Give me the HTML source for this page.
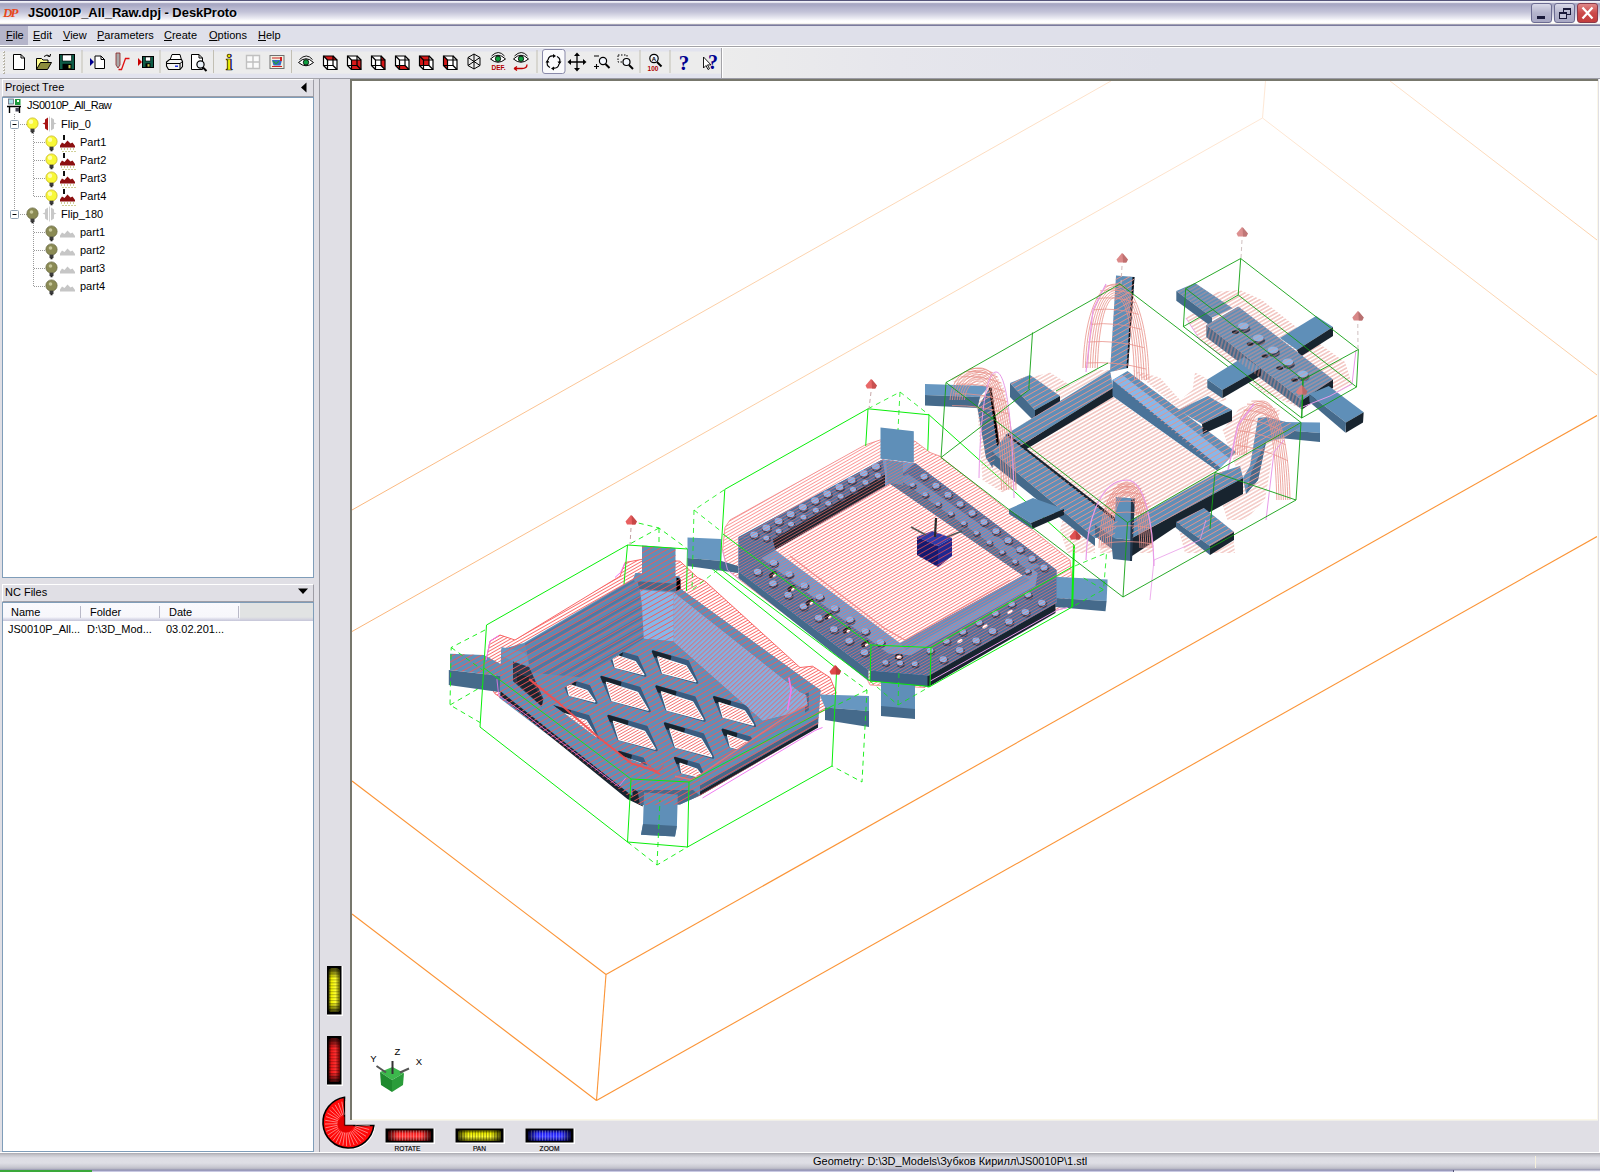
<!DOCTYPE html>
<html lang="en">
<head>
<meta charset="utf-8">
<title>JS0010P_All_Raw.dpj - DeskProto</title>
<style>
*{box-sizing:border-box;margin:0;padding:0}
html,body{width:1600px;height:1172px;overflow:hidden;background:#e0dfe5;font-family:"Liberation Sans",sans-serif;font-size:11px;color:#000}
.abs{position:absolute}
#titlebar{left:0;top:0;width:1600px;height:26px;background:linear-gradient(to bottom,#55557a 0,#55557a 1px,#f0f0f8 1px,#eeeef6 2.3px,#a8a8c2 3.6px,#a8a8c4 5px,#b6b6ce 8px,#c4c4d8 12px,#dcdce8 16px,#f0f0f6 19px,#ffffff 21px,#fefefe 22.5px,#f6f4ee 23px,#f0eee8 24.3px,#7a7a9c 24.6px,#7a7a9c 26px)}
#title{left:28px;top:4px;font-weight:bold;font-size:13px;letter-spacing:-0.05px;line-height:18px;white-space:nowrap;text-shadow:1px 1px 1px rgba(255,255,255,.6)}
#dp{left:3px;top:4px;font-family:"Liberation Serif",serif;font-style:italic;font-weight:bold;font-size:13px;color:#e8481c;letter-spacing:-2px;line-height:18px}
.wbtn{top:3px;width:21px;height:20px;border:1px solid #6c6c92;border-radius:3px;background:linear-gradient(to bottom,#d8d8e8,#b4b4cc 50%,#a8a8c4)}
#menubar{left:0;top:26px;width:1600px;height:19px;background:#dfe0ea}
#menubar span{position:absolute;top:0;height:19px;line-height:18px;white-space:nowrap}
#menubar u{text-decoration:underline}
#toolbar{left:0;top:45px;width:1600px;height:33px;background:linear-gradient(to bottom,#ffffff 0,#ffffff 1px,#a2a2a6 1px,#a2a2a6 2px,#ffffff 2px,#ffffff 3px,#e2e3ee 3px,#e2e3ee 6px,#ececec 7px,#ececec 28px,#e2e3ee 29.5px,#e2e3ee 33px)}
#tbfill{left:723px;top:48px;width:877px;height:30px;background:linear-gradient(to right,#ececec 0,#e6e6ec 20%,#e0e1ea 50%)}
.hdr{left:2px;width:312px;height:18px;background:#e0dfe5;border:1px solid #9d9da6;border-top-color:#fff;border-left-color:#fff;line-height:14px;padding-left:2px;white-space:nowrap}
.pane{left:2px;width:312px;background:#fff;border:1px solid #7f9db9}
.tree span{position:absolute;white-space:nowrap;line-height:14px;height:14px}
svg{position:absolute;left:0;top:0;overflow:visible}
</style>
</head>
<body>
<!-- ===== title bar ===== -->
<div id="titlebar" class="abs"></div>
<div id="dp" class="abs">DP</div>
<div id="title" class="abs">JS0010P_All_Raw.dpj - DeskProto</div>
<div class="abs wbtn" style="left:1531px"><div class="abs" style="left:5px;top:12px;width:8px;height:3px;background:#1a1a3a"></div></div>
<div class="abs wbtn" style="left:1554px">
  <div class="abs" style="left:8px;top:4px;width:8px;height:7px;border:1px solid #1a1a3a;border-top-width:2px"></div>
  <div class="abs" style="left:4px;top:8px;width:8px;height:7px;border:1px solid #1a1a3a;border-top-width:2px;background:#c4c4d8"></div>
</div>
<div class="abs wbtn" style="left:1577px;background:linear-gradient(to bottom,#e08888,#cc4a4a 50%,#c23c3c);border-color:#8a3a4a">
  <svg width="21" height="20" viewBox="0 0 21 20" style="left:-1px;top:-1px"><path d="M5.5 4.5 L15.5 15.5 M15.5 4.5 L5.5 15.5" stroke="#fff" stroke-width="2.2" fill="none"/></svg>
</div>

<!-- ===== menu bar ===== -->
<div id="menubar" class="abs">
  <div class="abs" style="left:0;top:0;width:28px;height:19px;background:#b5b5ca"></div>
  <span style="left:6px"><u>F</u>ile</span>
  <span style="left:33px"><u>E</u>dit</span>
  <span style="left:63px"><u>V</u>iew</span>
  <span style="left:97px"><u>P</u>arameters</span>
  <span style="left:164px"><u>C</u>reate</span>
  <span style="left:209px"><u>O</u>ptions</span>
  <span style="left:258px"><u>H</u>elp</span>
</div>

<!-- ===== toolbar ===== -->
<div id="toolbar" class="abs"></div>
<div id="tbfill" class="abs"></div>
<div class="abs" style="left:0;top:78px;width:1600px;height:1px;background:#a4a4aa"></div>
<div class="abs" style="left:721px;top:48px;width:1px;height:30px;background:#a4a4a8"></div><div class="abs" style="left:722px;top:48px;width:1px;height:30px;background:#fff"></div>
<svg width="1600" height="1172" viewBox="0 0 1600 1172" style="pointer-events:none">
<rect x="3" y="51" width="2" height="2" fill="#b8b5a8"/><rect x="3" y="51" width="1" height="1" fill="#fff"/>
<rect x="3" y="54" width="2" height="2" fill="#b8b5a8"/><rect x="3" y="54" width="1" height="1" fill="#fff"/>
<rect x="3" y="57" width="2" height="2" fill="#b8b5a8"/><rect x="3" y="57" width="1" height="1" fill="#fff"/>
<rect x="3" y="60" width="2" height="2" fill="#b8b5a8"/><rect x="3" y="60" width="1" height="1" fill="#fff"/>
<rect x="3" y="63" width="2" height="2" fill="#b8b5a8"/><rect x="3" y="63" width="1" height="1" fill="#fff"/>
<rect x="3" y="66" width="2" height="2" fill="#b8b5a8"/><rect x="3" y="66" width="1" height="1" fill="#fff"/>
<rect x="3" y="69" width="2" height="2" fill="#b8b5a8"/><rect x="3" y="69" width="1" height="1" fill="#fff"/>
<rect x="3" y="72" width="2" height="2" fill="#b8b5a8"/><rect x="3" y="72" width="1" height="1" fill="#fff"/>
<rect x="81.5" y="50" width="1" height="23" fill="#c2bfb4"/>
<rect x="159.5" y="50" width="1" height="23" fill="#c2bfb4"/>
<rect x="213.0" y="50" width="1" height="23" fill="#c2bfb4"/>
<rect x="291.0" y="50" width="1" height="23" fill="#c2bfb4"/>
<rect x="536.5" y="50" width="1" height="23" fill="#c2bfb4"/>
<rect x="639.5" y="50" width="1" height="23" fill="#c2bfb4"/>
<rect x="669.5" y="50" width="1" height="23" fill="#c2bfb4"/>
<path d="M13.5 54.5 h7.5 l3.5 3.5 v11.5 h-11.0 z" fill="#fff" stroke="#000" stroke-width="1" /><path d="M21.0 54.5 v3.5 h3.5" fill="none" stroke="#000" stroke-width="1"/>
<path d="M36.5 69.5 v-11 h5 l1.5 1.5 h5 v2.5" fill="#ffff90" stroke="#000" stroke-width="1"/>
<path d="M36.5 69.5 l4 -7 h11 l-4 7 z" fill="#8c8c3c" stroke="#000" stroke-width="1"/>
<path d="M44 56.5 q3 -3 6 0 m0 0 l-2.5 -0.5 m2.5 0.5 l0.5 -2.5" fill="none" stroke="#000" stroke-width="1"/>
<rect x="59.5" y="54.5" width="15" height="15" fill="#0e5c46" stroke="#000" stroke-width="1"/><rect x="62.5" y="55.0" width="9" height="6" fill="#fff" stroke="#000" stroke-width="0.6"/><rect x="62.5" y="63.8" width="9" height="5.7" fill="#000"/><rect x="68.5" y="65.0" width="2" height="3.3" fill="#c8c850"/>
<path d="M90 58 l4 4 l-4 4 z" fill="#000090"/>
<path d="M95.0 56.0 h6.0 l3.5 3.5 v9.0 h-9.5 z" fill="#fff" stroke="#000" stroke-width="1" /><path d="M101.0 56.0 v3.5 h3.5" fill="none" stroke="#000" stroke-width="1"/>
<path d="M116 53 h4 v12 l-2 3 l-2 -3 z" fill="#a8a8a8" stroke="#8a2020" stroke-width="0.8"/>
<path d="M118.5 69.5 h3 l4 -11 h4" fill="none" stroke="#e01010" stroke-width="1.3"/>
<path d="M138 58 l4 4 l-4 4 z" fill="#c80000"/>
<rect x="142.5" y="56.5" width="11" height="11" fill="#0e5c46" stroke="#000" stroke-width="1"/><rect x="145.5" y="57.0" width="5" height="4" fill="#fff" stroke="#000" stroke-width="0.6"/><rect x="145.5" y="63.3" width="5" height="4.2" fill="#000"/><rect x="147.5" y="64.2" width="2" height="2.4" fill="#c8c850"/>
<path d="M170 60 l2 -5.5 h8 l1.5 5.5" fill="#fff" stroke="#000" stroke-width="1"/>
<path d="M166.5 66 v-4 l3 -2.5 h12 l1 2 v5 l-2.5 3 h-11.5 z" fill="#f4f4f4" stroke="#000" stroke-width="1.1"/>
<path d="M166.5 63.5 h13.5 l2.5 -2 M180 63.5 v5.5" fill="none" stroke="#000" stroke-width="1"/><rect x="175" y="65.5" width="3" height="1.5" fill="#2030e0"/>
<path d="M191.5 54.5 h7.5 l3.5 3.5 v11.5 h-11.0 z" fill="#fff" stroke="#000" stroke-width="1" /><path d="M199.0 54.5 v3.5 h3.5" fill="none" stroke="#000" stroke-width="1"/>
<circle cx="200.5" cy="64.5" r="3.6" fill="#e8f0f8" stroke="#000" stroke-width="1.2"/><path d="M203 67.5 l3.5 3.5" stroke="#000" stroke-width="2"/>
<text x="230" y="70" text-anchor="middle" font-family="Liberation Serif,serif" font-weight="bold" font-size="23" fill="#2020c0">i</text>
<text x="229" y="69.5" text-anchor="middle" font-family="Liberation Serif,serif" font-weight="bold" font-size="23" fill="#f8f000" stroke="#000" stroke-width="0.7">i</text>
<path d="M246.5 55.5 h13 v13 h-13 z M253 55.5 v13 M246.5 62 h13" fill="#fafafa" stroke="#c0c0c0" stroke-width="1.4"/>
<rect x="270" y="55.5" width="14" height="13" fill="#f0f0e0" stroke="#707070" stroke-width="1"/>
<path d="M272 58 h10 M272 66.5 h10" stroke="#d02020" stroke-width="1.2"/><path d="M272 60 h10 l-1.5 5.5 h-7 z" fill="#3868c8"/><path d="M273 61 l3 3 l3 -3" fill="none" stroke="#20a040" stroke-width="1.2"/><rect x="280" y="57" width="2" height="4" fill="#d02020"/>
<path d="M298.5 62.5 q7.5 -7.5 15 0 q-7.5 6.5 -15 0 z" fill="#fff" stroke="#000" stroke-width="1"/><circle cx="306.0" cy="62.3" r="2.7" fill="#10a040" stroke="#000" stroke-width="0.8"/><path d="M299.5 59.5 q7 -7 13 0" fill="none" stroke="#000" stroke-width="0.9"/>
<polygon points="323.5,56.0 333.0,56.0 337.0,60.0 337.0,69.5 327.5,69.5 323.5,65.5" fill="#fff"/><polygon points="323.5,56.0 327.5,60.0 337.0,60.0 333.0,56.0" fill="#d81818"/><polygon points="323.5,56.0 333.0,56.0 333.0,65.5 323.5,65.5" fill="none" stroke="#000" stroke-width="1.2"/><polygon points="327.5,60.0 337.0,60.0 337.0,69.5 327.5,69.5" fill="none" stroke="#000" stroke-width="1.2"/><path d="M323.5 56.0 L327.5 60.0" stroke="#000" stroke-width="1.2"/><path d="M333.0 56.0 L337.0 60.0" stroke="#000" stroke-width="1.2"/><path d="M333.0 65.5 L337.0 69.5" stroke="#000" stroke-width="1.2"/><path d="M323.5 65.5 L327.5 69.5" stroke="#000" stroke-width="1.2"/>
<polygon points="347.5,56.0 357.0,56.0 361.0,60.0 361.0,69.5 351.5,69.5 347.5,65.5" fill="#fff"/><polygon points="351.5,60.0 361.0,60.0 361.0,69.5 351.5,69.5" fill="#d81818"/><polygon points="347.5,56.0 357.0,56.0 357.0,65.5 347.5,65.5" fill="none" stroke="#000" stroke-width="1.2"/><polygon points="351.5,60.0 361.0,60.0 361.0,69.5 351.5,69.5" fill="none" stroke="#000" stroke-width="1.2"/><path d="M347.5 56.0 L351.5 60.0" stroke="#000" stroke-width="1.2"/><path d="M357.0 56.0 L361.0 60.0" stroke="#000" stroke-width="1.2"/><path d="M357.0 65.5 L361.0 69.5" stroke="#000" stroke-width="1.2"/><path d="M347.5 65.5 L351.5 69.5" stroke="#000" stroke-width="1.2"/>
<polygon points="371.5,56.0 381.0,56.0 385.0,60.0 385.0,69.5 375.5,69.5 371.5,65.5" fill="#fff"/><polygon points="381.0,56.0 385.0,60.0 385.0,69.5 381.0,65.5" fill="#d81818"/><polygon points="371.5,56.0 381.0,56.0 381.0,65.5 371.5,65.5" fill="none" stroke="#000" stroke-width="1.2"/><polygon points="375.5,60.0 385.0,60.0 385.0,69.5 375.5,69.5" fill="none" stroke="#000" stroke-width="1.2"/><path d="M371.5 56.0 L375.5 60.0" stroke="#000" stroke-width="1.2"/><path d="M381.0 56.0 L385.0 60.0" stroke="#000" stroke-width="1.2"/><path d="M381.0 65.5 L385.0 69.5" stroke="#000" stroke-width="1.2"/><path d="M371.5 65.5 L375.5 69.5" stroke="#000" stroke-width="1.2"/>
<polygon points="395.5,56.0 405.0,56.0 409.0,60.0 409.0,69.5 399.5,69.5 395.5,65.5" fill="#fff"/><polygon points="395.5,65.5 399.5,69.5 409.0,69.5 405.0,65.5" fill="#d81818"/><polygon points="395.5,56.0 405.0,56.0 405.0,65.5 395.5,65.5" fill="none" stroke="#000" stroke-width="1.2"/><polygon points="399.5,60.0 409.0,60.0 409.0,69.5 399.5,69.5" fill="none" stroke="#000" stroke-width="1.2"/><path d="M395.5 56.0 L399.5 60.0" stroke="#000" stroke-width="1.2"/><path d="M405.0 56.0 L409.0 60.0" stroke="#000" stroke-width="1.2"/><path d="M405.0 65.5 L409.0 69.5" stroke="#000" stroke-width="1.2"/><path d="M395.5 65.5 L399.5 69.5" stroke="#000" stroke-width="1.2"/>
<polygon points="419.5,56.0 429.0,56.0 433.0,60.0 433.0,69.5 423.5,69.5 419.5,65.5" fill="#fff"/><polygon points="419.5,56.0 429.0,56.0 429.0,65.5 419.5,65.5" fill="#d81818"/><polygon points="419.5,56.0 429.0,56.0 429.0,65.5 419.5,65.5" fill="none" stroke="#000" stroke-width="1.2"/><polygon points="423.5,60.0 433.0,60.0 433.0,69.5 423.5,69.5" fill="none" stroke="#000" stroke-width="1.2"/><path d="M419.5 56.0 L423.5 60.0" stroke="#000" stroke-width="1.2"/><path d="M429.0 56.0 L433.0 60.0" stroke="#000" stroke-width="1.2"/><path d="M429.0 65.5 L433.0 69.5" stroke="#000" stroke-width="1.2"/><path d="M419.5 65.5 L423.5 69.5" stroke="#000" stroke-width="1.2"/>
<polygon points="443.5,56.0 453.0,56.0 457.0,60.0 457.0,69.5 447.5,69.5 443.5,65.5" fill="#fff"/><polygon points="443.5,56.0 447.5,60.0 447.5,69.5 443.5,65.5" fill="#d81818"/><polygon points="443.5,56.0 453.0,56.0 453.0,65.5 443.5,65.5" fill="none" stroke="#000" stroke-width="1.2"/><polygon points="447.5,60.0 457.0,60.0 457.0,69.5 447.5,69.5" fill="none" stroke="#000" stroke-width="1.2"/><path d="M443.5 56.0 L447.5 60.0" stroke="#000" stroke-width="1.2"/><path d="M453.0 56.0 L457.0 60.0" stroke="#000" stroke-width="1.2"/><path d="M453.0 65.5 L457.0 69.5" stroke="#000" stroke-width="1.2"/><path d="M443.5 65.5 L447.5 69.5" stroke="#000" stroke-width="1.2"/>
<path d="M474 54 l6 3.5 v8 l-6 3.5 l-6 -3.5 v-8 z M474 54 v15 M468 57.5 l12 8 M480 57.5 l-12 8" fill="none" stroke="#000" stroke-width="1"/>
<path d="M490.5 59.0 q7.5 -7.5 15 0 q-7.5 6.5 -15 0 z" fill="#fff" stroke="#000" stroke-width="1"/><circle cx="498.0" cy="58.8" r="2.7" fill="#10a040" stroke="#000" stroke-width="0.8"/><path d="M491.5 56.0 q7 -7 13 0" fill="none" stroke="#000" stroke-width="0.9"/>
<text x="498.5" y="70" text-anchor="middle" font-family="Liberation Sans,sans-serif" font-weight="bold" font-size="6.5" fill="#b00000">DEF.</text>
<path d="M513.5 59.0 q7.5 -7.5 15 0 q-7.5 6.5 -15 0 z" fill="#fff" stroke="#000" stroke-width="1"/><circle cx="521.0" cy="58.8" r="2.7" fill="#10a040" stroke="#000" stroke-width="0.8"/><path d="M514.5 56.0 q7 -7 13 0" fill="none" stroke="#000" stroke-width="0.9"/>
<path d="M514 68.5 h8 q5 0 5 -4 M514 68.5 l3 -2 M514 68.5 l3 2" fill="none" stroke="#c00000" stroke-width="1.3"/>
<rect x="542.5" y="49.5" width="22.5" height="24" rx="2.5" fill="#fafafc" stroke="#8a8aaa" stroke-width="1"/>
<g fill="none" stroke="#000" stroke-width="1.2"><path d="M548 60 q1 -5 6 -4"/><path d="M559 64 q-1 5 -6 4"/><path d="M557 56.5 q4 2 2.5 6"/><path d="M550 67.5 q-4 -2 -2.5 -6"/></g>
<g fill="#000"><path d="M553 54 l3 2 l-3 2z"/><path d="M554 70.5 l-3 -2 l3 -2z"/><path d="M561.5 61.5 l-2 3 l-2 -3z"/><path d="M545.5 62.5 l2 -3 l2 3z"/></g>
<path d="M577 54 v16 M569 62 h16" stroke="#000" stroke-width="1.3"/><g fill="#000"><path d="M577 52.5 l3 3.5 h-6z"/><path d="M577 71.5 l3 -3.5 h-6z"/><path d="M567.5 62 l3.5 -3 v6z"/><path d="M586.5 62 l-3.5 -3 v6z"/></g>
<circle cx="603" cy="61" r="3.6" fill="#f4f8ff" stroke="#000" stroke-width="1.2"/><path d="M605.5 64 l4 4" stroke="#000" stroke-width="2"/><path d="M594 56 h5 M594 66.5 h5 M596.5 64 v5" stroke="#000" stroke-width="1.1"/>
<rect x="618" y="55" width="9" height="7" fill="none" stroke="#000" stroke-width="1" stroke-dasharray="1.5 1.5"/><circle cx="626.5" cy="62" r="3.5" fill="#f4f8ff" stroke="#000" stroke-width="1.2"/><path d="M629 65 l4 4" stroke="#000" stroke-width="2"/>
<circle cx="654" cy="58.5" r="4.2" fill="#f4f8ff" stroke="#000" stroke-width="1.2"/><path d="M657 62 l4.5 4.5" stroke="#000" stroke-width="2"/><text x="654" y="61" text-anchor="middle" font-family="Liberation Sans,sans-serif" font-size="6" font-weight="bold" fill="#000">A</text><text x="653" y="71" text-anchor="middle" font-family="Liberation Sans,sans-serif" font-weight="bold" font-size="6.5" fill="#b00000">100</text>
<text x="684" y="69.5" text-anchor="middle" font-family="Liberation Serif,serif" font-weight="bold" font-size="21" fill="#000090">?</text>
<path d="M703.5 57 v11 l2.5 -2.5 l2 4 l1.5 -0.8 l-2 -3.8 h3.5 z" fill="#fff" stroke="#000" stroke-width="0.9"/><text x="713" y="68.5" text-anchor="middle" font-family="Liberation Serif,serif" font-weight="bold" font-size="20" fill="#000090">?</text>
</svg>

<!-- ===== left panel ===== -->
<div class="abs" style="left:0;top:79px;width:320px;height:1073px;background:#e0dfe5"></div>
<div class="abs hdr" style="top:79px">Project Tree</div>
<div class="abs pane tree" style="top:97px;height:481px">
<span style="left:24px;top:0px;letter-spacing:-0.45px">JS0010P_All_Raw</span>
<span style="left:58px;top:19px">Flip_0</span>
<span style="left:77px;top:37px">Part1</span>
<span style="left:77px;top:55px">Part2</span>
<span style="left:77px;top:73px">Part3</span>
<span style="left:77px;top:91px">Part4</span>
<span style="left:58px;top:109px">Flip_180</span>
<span style="left:77px;top:127px">part1</span>
<span style="left:77px;top:145px">part2</span>
<span style="left:77px;top:163px">part3</span>
<span style="left:77px;top:181px">part4</span>
<svg width="1600" height="1172" viewBox="3 98 1600 1172" style="left:0;top:0">
<path d="M14.5 114 V214" stroke="#9a9a9a" stroke-width="1" stroke-dasharray="1 1"/>
<path d="M20 124.5 H27" stroke="#9a9a9a" stroke-width="1" stroke-dasharray="1 1"/>
<path d="M20 214.5 H27" stroke="#9a9a9a" stroke-width="1" stroke-dasharray="1 1"/>
<path d="M33.5 133 V196.5" stroke="#9a9a9a" stroke-width="1" stroke-dasharray="1 1"/><path d="M33.5 223 V286.5" stroke="#9a9a9a" stroke-width="1" stroke-dasharray="1 1"/>
<path d="M34 142.5 H46" stroke="#9a9a9a" stroke-width="1" stroke-dasharray="1 1"/>
<path d="M34 160.5 H46" stroke="#9a9a9a" stroke-width="1" stroke-dasharray="1 1"/>
<path d="M34 178.5 H46" stroke="#9a9a9a" stroke-width="1" stroke-dasharray="1 1"/>
<path d="M34 196.5 H46" stroke="#9a9a9a" stroke-width="1" stroke-dasharray="1 1"/>
<path d="M34 232.5 H46" stroke="#9a9a9a" stroke-width="1" stroke-dasharray="1 1"/>
<path d="M34 250.5 H46" stroke="#9a9a9a" stroke-width="1" stroke-dasharray="1 1"/>
<path d="M34 268.5 H46" stroke="#9a9a9a" stroke-width="1" stroke-dasharray="1 1"/>
<path d="M34 286.5 H46" stroke="#9a9a9a" stroke-width="1" stroke-dasharray="1 1"/>
<rect x="8.5" y="99" width="5" height="5" fill="#a8e0e8" stroke="#667" stroke-width="0.8"/><rect x="15" y="99" width="5.5" height="6" fill="#1c9a3c"/><rect x="17" y="100" width="2" height="2" fill="#fff"/>
<path d="M7 106.5 H21 M9.5 107 V113 M19.5 107 V113" stroke="#000" stroke-width="1.4" fill="none"/><rect x="15.5" y="108" width="3.5" height="3.5" fill="#445"/>
<rect x="10.5" y="120.5" width="8" height="8" rx="1" fill="#fff" stroke="#8ea0b4" stroke-width="1"/><path d="M12.5 124.5 H16.5" stroke="#000" stroke-width="1"/>
<rect x="10.5" y="210.5" width="8" height="8" rx="1" fill="#fff" stroke="#8ea0b4" stroke-width="1"/><path d="M12.5 214.5 H16.5" stroke="#000" stroke-width="1"/>
<circle cx="32.5" cy="123.5" r="5.6" fill="#f8f838" stroke="#c8b820" stroke-width="0.8"/><circle cx="31.0" cy="121.7" r="2.2" fill="#ffffb0"/><rect x="30.5" y="128.7" width="4" height="3.4" fill="#3c3c3c"/><rect x="31.5" y="131.7" width="2" height="1.6" fill="#222"/>
<circle cx="32.5" cy="213.5" r="5.6" fill="#8a8a54" stroke="#6c6c44" stroke-width="0.8"/><circle cx="31.5" cy="212.0" r="1.8" fill="#c8c89c"/><rect x="30.5" y="218.7" width="4" height="3.4" fill="#3c3c3c"/><rect x="31.5" y="221.7" width="2" height="1.6" fill="#222"/>
<circle cx="51.5" cy="141.5" r="5.6" fill="#f8f838" stroke="#c8b820" stroke-width="0.8"/><circle cx="50.0" cy="139.7" r="2.2" fill="#ffffb0"/><rect x="49.5" y="146.7" width="4" height="3.4" fill="#3c3c3c"/><rect x="50.5" y="149.7" width="2" height="1.6" fill="#222"/>
<circle cx="51.5" cy="159.5" r="5.6" fill="#f8f838" stroke="#c8b820" stroke-width="0.8"/><circle cx="50.0" cy="157.7" r="2.2" fill="#ffffb0"/><rect x="49.5" y="164.7" width="4" height="3.4" fill="#3c3c3c"/><rect x="50.5" y="167.7" width="2" height="1.6" fill="#222"/>
<circle cx="51.5" cy="177.5" r="5.6" fill="#f8f838" stroke="#c8b820" stroke-width="0.8"/><circle cx="50.0" cy="175.7" r="2.2" fill="#ffffb0"/><rect x="49.5" y="182.7" width="4" height="3.4" fill="#3c3c3c"/><rect x="50.5" y="185.7" width="2" height="1.6" fill="#222"/>
<circle cx="51.5" cy="195.5" r="5.6" fill="#f8f838" stroke="#c8b820" stroke-width="0.8"/><circle cx="50.0" cy="193.7" r="2.2" fill="#ffffb0"/><rect x="49.5" y="200.7" width="4" height="3.4" fill="#3c3c3c"/><rect x="50.5" y="203.7" width="2" height="1.6" fill="#222"/>
<circle cx="51.5" cy="231.5" r="5.6" fill="#8a8a54" stroke="#6c6c44" stroke-width="0.8"/><circle cx="50.5" cy="230.0" r="1.8" fill="#c8c89c"/><rect x="49.5" y="236.7" width="4" height="3.4" fill="#3c3c3c"/><rect x="50.5" y="239.7" width="2" height="1.6" fill="#222"/>
<circle cx="51.5" cy="249.5" r="5.6" fill="#8a8a54" stroke="#6c6c44" stroke-width="0.8"/><circle cx="50.5" cy="248.0" r="1.8" fill="#c8c89c"/><rect x="49.5" y="254.7" width="4" height="3.4" fill="#3c3c3c"/><rect x="50.5" y="257.7" width="2" height="1.6" fill="#222"/>
<circle cx="51.5" cy="267.5" r="5.6" fill="#8a8a54" stroke="#6c6c44" stroke-width="0.8"/><circle cx="50.5" cy="266.0" r="1.8" fill="#c8c89c"/><rect x="49.5" y="272.7" width="4" height="3.4" fill="#3c3c3c"/><rect x="50.5" y="275.7" width="2" height="1.6" fill="#222"/>
<circle cx="51.5" cy="285.5" r="5.6" fill="#8a8a54" stroke="#6c6c44" stroke-width="0.8"/><circle cx="50.5" cy="284.0" r="1.8" fill="#c8c89c"/><rect x="49.5" y="290.7" width="4" height="3.4" fill="#3c3c3c"/><rect x="50.5" y="293.7" width="2" height="1.6" fill="#222"/>
<path d="M48.0 117.5 l-3 2 v3 l-2.5 1 l2.5 1 v4 l3 2 z" fill="#a81414"/><path d="M51.0 117.5 l3 2 v3 l2.5 1 l-2.5 1 v4 l-3 2 z" fill="#c4c4c4"/><path d="M49.5 116.5 v15" stroke="#c8c8c8" stroke-width="0.8"/>
<path d="M48.0 207.5 l-3 2 v3 l-2.5 1 l2.5 1 v4 l3 2 z" fill="#c8c8c8"/><path d="M51.0 207.5 l3 2 v3 l2.5 1 l-2.5 1 v4 l-3 2 z" fill="#c8c8c8"/><path d="M49.5 206.5 v15" stroke="#c8c8c8" stroke-width="0.8"/>
<path d="M60.0 145.5 l2 -3 l2.5 1.5 l3 -3.5 l3 3 l2 -1 l2.5 3.5 v1.5 h-15 z" fill="#8c1010"/><rect x="63.0" y="135.0" width="2" height="5" fill="#111"/><rect x="61.0" y="148.5" width="1" height="1" fill="#a0a030"/><rect x="62.5" y="151.0" width="1" height="1" fill="#a0a030"/><rect x="64.0" y="148.5" width="1" height="1" fill="#a0a030"/><rect x="65.5" y="151.0" width="1" height="1" fill="#a0a030"/><rect x="67.0" y="148.5" width="1" height="1" fill="#a0a030"/><rect x="68.5" y="151.0" width="1" height="1" fill="#a0a030"/><rect x="70.0" y="148.5" width="1" height="1" fill="#a0a030"/><rect x="71.5" y="151.0" width="1" height="1" fill="#a0a030"/><rect x="73.0" y="148.5" width="1" height="1" fill="#a0a030"/><rect x="74.5" y="151.0" width="1" height="1" fill="#a0a030"/>
<path d="M60.0 163.5 l2 -3 l2.5 1.5 l3 -3.5 l3 3 l2 -1 l2.5 3.5 v1.5 h-15 z" fill="#8c1010"/><rect x="63.0" y="153.0" width="2" height="5" fill="#111"/><rect x="61.0" y="166.5" width="1" height="1" fill="#a0a030"/><rect x="62.5" y="169.0" width="1" height="1" fill="#a0a030"/><rect x="64.0" y="166.5" width="1" height="1" fill="#a0a030"/><rect x="65.5" y="169.0" width="1" height="1" fill="#a0a030"/><rect x="67.0" y="166.5" width="1" height="1" fill="#a0a030"/><rect x="68.5" y="169.0" width="1" height="1" fill="#a0a030"/><rect x="70.0" y="166.5" width="1" height="1" fill="#a0a030"/><rect x="71.5" y="169.0" width="1" height="1" fill="#a0a030"/><rect x="73.0" y="166.5" width="1" height="1" fill="#a0a030"/><rect x="74.5" y="169.0" width="1" height="1" fill="#a0a030"/>
<path d="M60.0 181.5 l2 -3 l2.5 1.5 l3 -3.5 l3 3 l2 -1 l2.5 3.5 v1.5 h-15 z" fill="#8c1010"/><rect x="63.0" y="171.0" width="2" height="5" fill="#111"/><rect x="61.0" y="184.5" width="1" height="1" fill="#a0a030"/><rect x="62.5" y="187.0" width="1" height="1" fill="#a0a030"/><rect x="64.0" y="184.5" width="1" height="1" fill="#a0a030"/><rect x="65.5" y="187.0" width="1" height="1" fill="#a0a030"/><rect x="67.0" y="184.5" width="1" height="1" fill="#a0a030"/><rect x="68.5" y="187.0" width="1" height="1" fill="#a0a030"/><rect x="70.0" y="184.5" width="1" height="1" fill="#a0a030"/><rect x="71.5" y="187.0" width="1" height="1" fill="#a0a030"/><rect x="73.0" y="184.5" width="1" height="1" fill="#a0a030"/><rect x="74.5" y="187.0" width="1" height="1" fill="#a0a030"/>
<path d="M60.0 199.5 l2 -3 l2.5 1.5 l3 -3.5 l3 3 l2 -1 l2.5 3.5 v1.5 h-15 z" fill="#8c1010"/><rect x="63.0" y="189.0" width="2" height="5" fill="#111"/><rect x="61.0" y="202.5" width="1" height="1" fill="#a0a030"/><rect x="62.5" y="205.0" width="1" height="1" fill="#a0a030"/><rect x="64.0" y="202.5" width="1" height="1" fill="#a0a030"/><rect x="65.5" y="205.0" width="1" height="1" fill="#a0a030"/><rect x="67.0" y="202.5" width="1" height="1" fill="#a0a030"/><rect x="68.5" y="205.0" width="1" height="1" fill="#a0a030"/><rect x="70.0" y="202.5" width="1" height="1" fill="#a0a030"/><rect x="71.5" y="205.0" width="1" height="1" fill="#a0a030"/><rect x="73.0" y="202.5" width="1" height="1" fill="#a0a030"/><rect x="74.5" y="205.0" width="1" height="1" fill="#a0a030"/>
<path d="M60.0 235.5 l2 -3 l2.5 1.5 l3 -3.5 l3 3 l2 -1 l2.5 3.5 v1.5 h-15 z" fill="#c6c6c6"/>
<path d="M60.0 253.5 l2 -3 l2.5 1.5 l3 -3.5 l3 3 l2 -1 l2.5 3.5 v1.5 h-15 z" fill="#c6c6c6"/>
<path d="M60.0 271.5 l2 -3 l2.5 1.5 l3 -3.5 l3 3 l2 -1 l2.5 3.5 v1.5 h-15 z" fill="#c6c6c6"/>
<path d="M60.0 289.5 l2 -3 l2.5 1.5 l3 -3.5 l3 3 l2 -1 l2.5 3.5 v1.5 h-15 z" fill="#c6c6c6"/>
</svg>
</div>
<div class="abs hdr" style="top:584px">NC Files</div>
<div class="abs pane" style="top:602px;height:550px">
  <div class="abs" style="left:0;top:0;width:310px;height:18px;background:linear-gradient(to bottom,#e1e3e3 0,#e1e3e3 14px,#d5d5e0 16px,#c5c5d8 18px)"></div>
  <div class="abs" style="left:0;top:0;width:237px;height:18px;background:linear-gradient(to bottom,#f9f9fd 0,#f7f7fb 14px,#dcdcea 16px,#c5c5d8 18px)"></div>
  <div class="abs" style="left:77px;top:3px;width:1px;height:12px;background:#b9b9c8"></div>
  <div class="abs" style="left:156px;top:3px;width:1px;height:12px;background:#b9b9c8"></div>
  <div class="abs" style="left:235px;top:3px;width:1px;height:12px;background:#b9b9c8"></div>
  <div class="abs" style="left:8px;top:2px;line-height:14px">Name</div>
  <div class="abs" style="left:87px;top:2px;line-height:14px">Folder</div>
  <div class="abs" style="left:166px;top:2px;line-height:14px">Date</div>
  <div class="abs" style="left:5px;top:19px;line-height:14px;white-space:nowrap">JS0010P_All...</div>
  <div class="abs" style="left:84px;top:19px;line-height:14px;white-space:nowrap">D:\3D_Mod...</div>
  <div class="abs" style="left:163px;top:19px;line-height:14px;white-space:nowrap">03.02.201...</div>
</div>

<svg width="1600" height="1172" viewBox="0 0 1600 1172"><path d="M301 87.5 L306.5 82.5 V92.5 Z" fill="#000"/><path d="M298 588.5 H308 L303 594 Z" fill="#000"/></svg>
<!-- ===== splitter + viewport frame ===== -->
<div class="abs" style="left:319px;top:79px;width:1px;height:1073px;background:#9a9aa2"></div>
<div class="abs" style="left:320px;top:78px;width:1280px;height:1074px;background:#e0dfe5"></div>
<div class="abs" style="left:320px;top:78px;width:1280px;height:1px;background:#9c9ca6"></div>
<div class="abs" style="left:350px;top:79px;width:1249px;height:1042px;background:#77776c"></div>
<div class="abs" style="left:352px;top:81px;width:1246px;height:1039px;background:#fbf7e8"></div>
<div class="abs" style="left:350px;top:1120px;width:1249px;height:1px;background:#efeee9"></div>
<div class="abs" style="left:1598px;top:79px;width:1px;height:1073px;background:#e0dfe5"></div>
<div class="abs" style="left:1599px;top:79px;width:1px;height:1073px;background:#fff"></div>
<div id="view" class="abs" style="left:352px;top:81px;width:1245px;height:1038px;background:#fff;overflow:hidden">
<svg width="1245" height="1038" viewBox="352 81 1245 1038">
<defs>
<pattern id="hR" patternUnits="userSpaceOnUse" width="40" height="2.8" patternTransform="rotate(-29.6)"><line x1="0" y1="1.4" x2="40" y2="1.4" stroke="#f85555" stroke-width="0.85"/></pattern>
<pattern id="hR2" patternUnits="userSpaceOnUse" width="40" height="2.65" patternTransform="rotate(-29.6)"><line x1="0" y1="1.3" x2="40" y2="1.3" stroke="#f07070" stroke-width="0.9"/></pattern>
<pattern id="hRw" patternUnits="userSpaceOnUse" width="40" height="4.6" patternTransform="rotate(-29.6)"><line x1="0" y1="2.3" x2="40" y2="2.3" stroke="#f85555" stroke-width="0.85"/></pattern>
<pattern id="hRv" patternUnits="userSpaceOnUse" width="40" height="3.4" patternTransform="rotate(-43)"><line x1="0" y1="1.5" x2="40" y2="1.5" stroke="#f85555" stroke-width="0.85"/></pattern>
<pattern id="hS" patternUnits="userSpaceOnUse" width="40" height="3.3" patternTransform="rotate(-29.6)"><line x1="0" y1="1.6" x2="40" y2="1.6" stroke="#e8928a" stroke-width="0.9"/></pattern>
<pattern id="hSw" patternUnits="userSpaceOnUse" width="40" height="4.4" patternTransform="rotate(-29.6)"><line x1="0" y1="2.2" x2="40" y2="2.2" stroke="#e8928a" stroke-width="0.9"/></pattern>
<pattern id="hSv" patternUnits="userSpaceOnUse" width="40" height="3.6" patternTransform="rotate(-75)"><line x1="0" y1="1.8" x2="40" y2="1.8" stroke="#e8928a" stroke-width="0.9"/></pattern>
<pattern id="stripe" patternUnits="userSpaceOnUse" width="40" height="9" patternTransform="rotate(-30.4)"><rect x="0" y="0" width="40" height="4" fill="#4a76a0"/></pattern>
</defs>
<defs><linearGradient id="ogL" gradientUnits="userSpaceOnUse" x1="352" y1="600" x2="1263" y2="100"><stop offset="0" stop-color="#fab478"/><stop offset="0.5" stop-color="#fcd2ac"/><stop offset="1" stop-color="#fee8d6"/></linearGradient><linearGradient id="ogR" gradientUnits="userSpaceOnUse" x1="1263" y1="100" x2="1597" y2="330"><stop offset="0" stop-color="#fee8d6"/><stop offset="1" stop-color="#fbcfa6"/></linearGradient></defs>
<polyline points="352.0,510.0 1111.0,81.0" fill="none" stroke="url(#ogL)" stroke-width="1" />
<polyline points="352.0,631.5 1262.5,118.0" fill="none" stroke="url(#ogL)" stroke-width="1" />
<polyline points="1265.5,81.0 1262.5,118.0" fill="none" stroke="#fee8d6" stroke-width="1" />
<polyline points="1262.5,118.0 1597.0,375.0" fill="none" stroke="url(#ogR)" stroke-width="1" />
<polyline points="1390.0,81.0 1597.0,240.0" fill="none" stroke="url(#ogR)" stroke-width="1" />
<polyline points="606.0,974.5 352.0,781.0" fill="none" stroke="#fb9436" stroke-width="1.1" />
<polyline points="606.0,974.5 1597.0,415.5" fill="none" stroke="#fb9436" stroke-width="1.1" />
<polyline points="596.5,1100.5 352.0,914.0" fill="none" stroke="#fb9436" stroke-width="1.1" />
<polyline points="596.5,1100.5 1597.0,536.5" fill="none" stroke="#fb9436" stroke-width="1.1" />
<polyline points="606.0,974.5 596.5,1100.5" fill="none" stroke="#fb9436" stroke-width="1.1" />
<g id="part1">
<polygon points="486.2,660.0 490.0,641.2 500.0,635.0 515.0,640.0 620.0,576.2 625.0,562.5 645.0,558.8 680.0,561.2 697.5,577.5 705.0,581.2 800.0,667.5 812.5,666.2 830.0,677.5 836.2,692.5 832.5,706.2 817.5,713.8 692.5,788.8 675.0,795.0 640.0,792.5 630.0,780.0 495.0,693.8 486.2,680.0" fill="url(#hR)" />
<polyline points="486.2,660.0 490.0,641.2 500.0,635.0 515.0,640.0 620.0,576.2 625.0,562.5 645.0,558.8 680.0,561.2 697.5,577.5 705.0,581.2 800.0,667.5 812.5,666.2 830.0,677.5 836.2,692.5 832.5,706.2 817.5,713.8 692.5,788.8 675.0,795.0 640.0,792.5 630.0,780.0 495.0,693.8 486.2,680.0 486.2,660.0" fill="none" stroke="#f85858" stroke-width="0.9" />
<polygon points="450.0,653.8 483.8,655.0 502.5,665.0 502.5,676.2 450.0,670.0" fill="#5f8fb8" />
<polygon points="448.8,670.0 502.5,676.2 502.5,692.5 448.8,685.0" fill="#456a8b" />
<polygon points="819.5,694.5 869.0,696.0 869.0,711.0 825.0,707.5" fill="#6797c1" />
<polygon points="825.0,707.5 869.0,711.0 869.0,727.0 825.0,720.0" fill="#456a8b" />
<polygon points="642.0,545.5 675.5,548.0 675.5,577.5 642.0,575.0" fill="#5f8fb8" />
<polygon points="501.2,649.5 523.8,643.0 633.0,579.2 635.5,573.0 679.5,576.5 680.5,588.8 813.0,685.0 820.5,690.0 818.0,727.5 700.0,795.5 680.0,804.5 640.0,805.0 499.5,698.0" fill="#5f8fb8" />
<polygon points="500.5,691.3 631.3,795.3 642.0,801.4 642.9,806.4 627.7,799.2 500.5,696.2" fill="#18242f" />
<polygon points="632.5,788.8 640.0,792.5 641.2,804.5 632.5,798.8" fill="#18242f" />
<polygon points="700.0,791.5 818.0,724.0 818.0,727.5 700.0,795.5" fill="#18242f" />
<polygon points="700.0,785.5 818.0,718.0 818.0,724.0 700.0,791.5" fill="#456a8b" />
<polygon points="637.5,790.0 693.0,790.0 700.0,795.5 680.0,804.5 640.0,805.0" fill="#456a8b" />
<polygon points="635.5,573.0 679.5,576.5 679.5,583.8 637.5,581.2" fill="#5f8fb8" />
<polygon points="637.5,581.2 677.5,583.8 677.5,591.5 639.2,589.0" fill="#456a8b" />
<polygon points="676.5,577.5 680.5,579.0 680.5,592.5 676.5,591.5" fill="#000" />
<polygon points="525.0,643.8 633.8,580.0 640.0,590.0 643.8,638.8 583.8,677.5 530.0,672.5 527.5,655.0" fill="#5b8ab4" />
<polygon points="525.0,643.8 633.8,580.0 640.0,590.0 643.8,638.8 583.8,677.5 530.0,672.5 527.5,655.0" fill="url(#stripe)" opacity="0.8"/>
<polygon points="501.4,646.9 523.8,652.3 527.3,655.8 529.1,667.0 513.0,661.6 501.4,655.8" fill="#6797c1" />
<polygon points="513.0,661.6 529.1,667.0 543.5,698.9 541.7,706.4 513.0,681.3" fill="#263a4e" />
<polygon points="517.0,673.8 529.1,677.3 542.6,699.7 541.7,706.0 517.0,682.7" fill="#18242f" />
<polygon points="640.0,590.0 673.8,592.5 673.8,641.2 643.8,638.8 642.0,605.0" fill="#87b7e9" />
<polygon points="673.8,592.5 680.5,588.8 813.0,685.0 806.2,695.0 800.0,692.5" fill="#5f8fb8" />
<polygon points="673.8,592.5 800.0,692.5 806.2,695.0 807.5,705.0 790.0,713.8 762.5,720.5 673.8,641.8" fill="#82b2e4" />
<polygon points="800.0,680.0 813.0,685.0 820.5,690.0 819.0,705.0 807.5,710.0 806.2,692.5" fill="#5f8fb8" />
<polygon points="805.0,693.8 808.8,692.5 808.8,710.0 805.0,712.5" fill="#456a8b" />
<polygon points="583.8,677.5 643.8,638.8 673.8,641.8 762.5,720.5 790.0,713.8 692.5,780.0 675.0,776.2 620.0,755.0 550.0,702.5 560.0,690.0" fill="#5f8fb8" />
<polygon points="644.0,792.5 677.8,794.4 676.9,826.0 675.0,836.6 641.0,834.7 643.0,824.0" fill="#5f8fb8" />
<polygon points="643.0,824.0 676.9,826.0 675.0,836.6 641.0,834.7" fill="#456a8b" />
<polygon points="501.2,649.5 523.8,643.0 633.0,579.2 635.5,573.0 679.5,576.5 680.5,588.8 813.0,685.0 820.5,690.0 818.0,727.5 700.0,795.5 680.0,804.5 640.0,805.0 499.5,698.0" fill="url(#hRw)" />
<polygon points="450.0,653.8 483.8,655.0 502.5,665.0 502.5,676.2 450.0,670.0" fill="url(#hRw)" />
<polygon points="642.0,545.5 675.5,548.0 675.5,577.5 642.0,575.0" fill="url(#hRw)" />
<polygon points="673.8,592.5 800.0,692.5 806.2,695.0 807.5,705.0 790.0,713.8 762.5,720.5 673.8,641.8" fill="#82b2e4" />
<polygon points="673.8,592.5 800.0,692.5 806.2,695.0 807.5,705.0 790.0,713.8 762.5,720.5 673.8,641.8" fill="url(#hRv)" opacity="0.9"/>
<clipPath id="cpFloor"><polygon points="583.8,677.5 643.8,638.8 673.8,641.8 762.5,720.5 790.0,713.8 692.5,780.0 675.0,776.2 620.0,755.0 550.0,702.5 560.0,690.0"/></clipPath>
<g clip-path="url(#cpFloor)">
<polygon points="606.8,648.4 637.2,657.2 645.2,675.6 614.8,666.8" fill="#3a5c80" stroke="#3a5c80" stroke-width="2.5" stroke-linejoin="round"/>
<polygon points="606.8,648.4 622.0,652.8 621.0,656.8 608.8,653.4" fill="#18242f" stroke="#18242f" stroke-width="2" stroke-linejoin="round"/>
<polygon points="652.9,651.4 687.9,661.5 697.1,682.6 662.1,672.5" fill="#3a5c80" stroke="#3a5c80" stroke-width="2.5" stroke-linejoin="round"/>
<polygon points="652.9,651.4 670.4,656.4 669.4,660.4 654.9,656.4" fill="#18242f" stroke="#18242f" stroke-width="2" stroke-linejoin="round"/>
<polygon points="561.7,678.3 589.1,686.2 596.3,702.7 568.9,694.8" fill="#3a5c80" stroke="#3a5c80" stroke-width="2.5" stroke-linejoin="round"/>
<polygon points="561.7,678.3 575.4,682.2 574.4,686.2 563.7,683.3" fill="#18242f" stroke="#18242f" stroke-width="2" stroke-linejoin="round"/>
<polygon points="601.5,677.0 639.5,688.0 649.5,711.0 611.5,700.0" fill="#3a5c80" stroke="#3a5c80" stroke-width="2.5" stroke-linejoin="round"/>
<polygon points="601.5,677.0 620.5,682.5 619.5,686.5 603.5,682.0" fill="#18242f" stroke="#18242f" stroke-width="2" stroke-linejoin="round"/>
<polygon points="656.5,686.5 694.5,697.5 704.5,720.5 666.5,709.5" fill="#3a5c80" stroke="#3a5c80" stroke-width="2.5" stroke-linejoin="round"/>
<polygon points="656.5,686.5 675.5,692.0 674.5,696.0 658.5,691.5" fill="#18242f" stroke="#18242f" stroke-width="2" stroke-linejoin="round"/>
<polygon points="714.1,697.1 746.4,706.4 754.9,725.9 722.6,716.6" fill="#3a5c80" stroke="#3a5c80" stroke-width="2.5" stroke-linejoin="round"/>
<polygon points="714.1,697.1 730.2,701.7 729.2,705.7 716.1,702.1" fill="#18242f" stroke="#18242f" stroke-width="2" stroke-linejoin="round"/>
<polygon points="552.2,705.9 588.3,716.3 597.8,738.1 561.7,727.7" fill="#3a5c80" stroke="#3a5c80" stroke-width="2.5" stroke-linejoin="round"/>
<polygon points="552.2,705.9 570.2,711.1 569.2,715.1 554.2,710.9" fill="#18242f" stroke="#18242f" stroke-width="2" stroke-linejoin="round"/>
<polygon points="608.5,716.0 646.5,727.0 656.5,750.0 618.5,739.0" fill="#3a5c80" stroke="#3a5c80" stroke-width="2.5" stroke-linejoin="round"/>
<polygon points="608.5,716.0 627.5,721.5 626.5,725.5 610.5,721.0" fill="#18242f" stroke="#18242f" stroke-width="2" stroke-linejoin="round"/>
<polygon points="665.0,723.5 703.0,734.5 713.0,757.5 675.0,746.5" fill="#3a5c80" stroke="#3a5c80" stroke-width="2.5" stroke-linejoin="round"/>
<polygon points="665.0,723.5 684.0,729.0 683.0,733.0 667.0,728.5" fill="#18242f" stroke="#18242f" stroke-width="2" stroke-linejoin="round"/>
<polygon points="722.7,729.8 750.1,737.7 757.3,754.2 729.9,746.3" fill="#3a5c80" stroke="#3a5c80" stroke-width="2.5" stroke-linejoin="round"/>
<polygon points="722.7,729.8 736.4,733.7 735.4,737.7 724.7,734.8" fill="#18242f" stroke="#18242f" stroke-width="2" stroke-linejoin="round"/>
<polygon points="619.1,752.0 642.7,758.8 648.9,773.0 625.3,766.2" fill="#3a5c80" stroke="#3a5c80" stroke-width="2.5" stroke-linejoin="round"/>
<polygon points="619.1,752.0 630.9,755.4 629.9,759.4 621.1,757.0" fill="#18242f" stroke="#18242f" stroke-width="2" stroke-linejoin="round"/>
<polygon points="675.1,758.0 698.7,764.8 704.9,779.0 681.3,772.2" fill="#3a5c80" stroke="#3a5c80" stroke-width="2.5" stroke-linejoin="round"/>
<polygon points="675.1,758.0 686.9,761.4 685.9,765.4 677.1,763.0" fill="#18242f" stroke="#18242f" stroke-width="2" stroke-linejoin="round"/>
<polygon points="581.2,744.4 598.3,749.3 602.8,759.6 585.7,754.7" fill="#3a5c80" stroke="#3a5c80" stroke-width="2.5" stroke-linejoin="round"/>
<polygon points="581.2,744.4 589.8,746.8 588.8,750.8 583.2,749.4" fill="#18242f" stroke="#18242f" stroke-width="2" stroke-linejoin="round"/>
<polygon points="611.8,653.9 635.2,661.7 643.7,674.6 615.3,667.3" fill="#fff" stroke="#fff" stroke-width="1.5" stroke-linejoin="round"/>
<polygon points="611.8,653.9 635.2,661.7 643.7,674.6 615.3,667.3" fill="url(#hR2)" />
<polygon points="657.9,656.9 685.9,666.0 695.6,681.6 662.6,673.0" fill="#fff" stroke="#fff" stroke-width="1.5" stroke-linejoin="round"/>
<polygon points="657.9,656.9 685.9,666.0 695.6,681.6 662.6,673.0" fill="url(#hR2)" />
<polygon points="566.7,683.8 587.1,690.7 594.8,701.7 569.4,695.3" fill="#fff" stroke="#fff" stroke-width="1.5" stroke-linejoin="round"/>
<polygon points="566.7,683.8 587.1,690.7 594.8,701.7 569.4,695.3" fill="url(#hR2)" />
<polygon points="606.5,682.5 637.5,692.5 648.0,710.0 612.0,700.5" fill="#fff" stroke="#fff" stroke-width="1.5" stroke-linejoin="round"/>
<polygon points="606.5,682.5 637.5,692.5 648.0,710.0 612.0,700.5" fill="url(#hR2)" />
<polygon points="661.5,692.0 692.5,702.0 703.0,719.5 667.0,710.0" fill="#fff" stroke="#fff" stroke-width="1.5" stroke-linejoin="round"/>
<polygon points="661.5,692.0 692.5,702.0 703.0,719.5 667.0,710.0" fill="url(#hR2)" />
<polygon points="719.1,702.6 744.4,710.9 753.4,724.9 723.1,717.1" fill="#fff" stroke="#fff" stroke-width="1.5" stroke-linejoin="round"/>
<polygon points="719.1,702.6 744.4,710.9 753.4,724.9 723.1,717.1" fill="url(#hR2)" />
<polygon points="557.2,711.4 586.3,720.8 596.3,737.1 562.2,728.2" fill="#fff" stroke="#fff" stroke-width="1.5" stroke-linejoin="round"/>
<polygon points="557.2,711.4 586.3,720.8 596.3,737.1 562.2,728.2" fill="url(#hR2)" />
<polygon points="613.5,721.5 644.5,731.5 655.0,749.0 619.0,739.5" fill="#fff" stroke="#fff" stroke-width="1.5" stroke-linejoin="round"/>
<polygon points="613.5,721.5 644.5,731.5 655.0,749.0 619.0,739.5" fill="url(#hR2)" />
<polygon points="670.0,729.0 701.0,739.0 711.5,756.5 675.5,747.0" fill="#fff" stroke="#fff" stroke-width="1.5" stroke-linejoin="round"/>
<polygon points="670.0,729.0 701.0,739.0 711.5,756.5 675.5,747.0" fill="url(#hR2)" />
<polygon points="727.7,735.3 748.1,742.2 755.8,753.2 730.4,746.8" fill="#fff" stroke="#fff" stroke-width="1.5" stroke-linejoin="round"/>
<polygon points="727.7,735.3 748.1,742.2 755.8,753.2 730.4,746.8" fill="url(#hR2)" />
<polygon points="624.1,757.5 640.7,763.3 647.4,772.0 625.8,766.7" fill="#fff" stroke="#fff" stroke-width="1.5" stroke-linejoin="round"/>
<polygon points="624.1,757.5 640.7,763.3 647.4,772.0 625.8,766.7" fill="url(#hR2)" />
<polygon points="680.1,763.5 696.7,769.3 703.4,778.0 681.8,772.7" fill="#fff" stroke="#fff" stroke-width="1.5" stroke-linejoin="round"/>
<polygon points="680.1,763.5 696.7,769.3 703.4,778.0 681.8,772.7" fill="url(#hR2)" />
<polygon points="586.2,749.9 596.3,753.8 601.3,758.6 586.2,755.2" fill="#fff" stroke="#fff" stroke-width="1.5" stroke-linejoin="round"/>
<polygon points="586.2,749.9 596.3,753.8 601.3,758.6 586.2,755.2" fill="url(#hR2)" />
</g>
<polyline points="529.1,679.1 556.0,700.6 595.4,734.7 631.3,763.4 649.2,768.7 660.0,774.1" fill="none" stroke="#f64e4e" stroke-width="2.0" opacity="0.9"/>
<polyline points="675.0,776.2 692.5,780.0 790.0,713.8 807.5,705.0" fill="none" stroke="#f07070" stroke-width="1.5" opacity="0.85"/>
<path d="M637.5 767.5 q6 -10 14 0 q6 8 12 -2" fill="none" stroke="#f64e4e" stroke-width="1" />
<polyline points="702.5,798.0 815.0,730.5 822.5,727.5" fill="none" stroke="#f07af0" stroke-width="1" />
<polyline points="788.8,677.5 791.2,690.0 787.5,710.0" fill="none" stroke="#f07af0" stroke-width="1.6" />
<polyline points="486.2,660.0 490.0,641.2 498.8,635.5" fill="none" stroke="#f07af0" stroke-width="1" />
<polyline points="615.0,577.5 620.5,572.5 625.0,563.0" fill="none" stroke="#f07af0" stroke-width="1" />
<polyline points="496.9,679.1 498.7,695.3 523.8,713.2 618.7,786.7 625.9,777.7" fill="none" stroke="#f07af0" stroke-width="0.8" />
<polyline points="486.5,625.0 627.5,545.0 687.5,549.0 836.7,668.6" fill="none" stroke="#0aee0a" stroke-width="1.0" />
<polyline points="486.5,625.0 480.0,727.0" fill="none" stroke="#0aee0a" stroke-width="1.0" />
<polyline points="836.7,668.6 832.0,766.0" fill="none" stroke="#0aee0a" stroke-width="1.0" />
<polyline points="627.5,545.0 624.0,584.0" fill="none" stroke="#0aee0a" stroke-width="1.0" />
<polyline points="687.5,549.0 686.5,591.0" fill="none" stroke="#0aee0a" stroke-width="1.0" />
<polyline points="480.0,727.0 627.5,842.0 687.5,847.0 832.0,766.0" fill="none" stroke="#0aee0a" stroke-width="1.0" />
<polyline points="627.5,842.0 631.0,779.0 689.0,782.0 687.5,847.0" fill="none" stroke="#0aee0a" stroke-width="1.0" />
<polyline points="631.0,779.0 484.0,668.0" fill="none" stroke="#0aee0a" stroke-width="0.9" />
<polyline points="689.0,782.0 834.0,705.0" fill="none" stroke="#0aee0a" stroke-width="0.9" />
<polyline points="485.0,630.0 451.2,647.5 450.0,705.0 480.0,722.5" fill="none" stroke="#0aee0a" stroke-width="0.9" stroke-dasharray="5 4"/>
<polyline points="451.2,647.5 482.5,670.0" fill="none" stroke="#0aee0a" stroke-width="0.9" stroke-dasharray="5 4"/>
<polyline points="450.0,705.0 482.5,686.2" fill="none" stroke="#0aee0a" stroke-width="0.9" stroke-dasharray="5 4"/>
<polyline points="630.0,521.0 659.0,528.0 687.5,549.0" fill="none" stroke="#0aee0a" stroke-width="0.9" stroke-dasharray="5 4"/>
<polyline points="659.0,528.0 628.0,545.0" fill="none" stroke="#0aee0a" stroke-width="0.9" stroke-dasharray="5 4"/>
<polyline points="659.0,528.0 659.0,546.0" fill="none" stroke="#0aee0a" stroke-width="0.9" stroke-dasharray="5 4"/>
<polyline points="837.0,668.0 867.0,690.0 862.0,782.0 832.0,766.0" fill="none" stroke="#0aee0a" stroke-width="0.9" stroke-dasharray="5 4"/>
<polyline points="867.0,690.0 837.0,705.0" fill="none" stroke="#0aee0a" stroke-width="0.9" stroke-dasharray="5 4"/>
<polyline points="627.5,842.0 657.0,865.0 687.5,847.0" fill="none" stroke="#0aee0a" stroke-width="0.9" stroke-dasharray="5 4"/>
<polyline points="657.0,865.0 660.0,800.0" fill="none" stroke="#0aee0a" stroke-width="0.9" stroke-dasharray="5 4"/>
<polyline points="631.0,528.0 630.0,545.0" fill="none" stroke="#c0a0a0" stroke-width="1" stroke-dasharray="4 3"/>
</g>
<g id="part2">
<polygon points="738.8,537.5 882.5,460.0 880.0,440.0 915.0,441.2 930.0,452.5 940.0,456.2 1070.0,560.0 1072.5,585.0 1067.5,607.5 1057.5,610.0 930.0,681.2 925.0,687.5 870.0,685.0 865.0,675.0 740.0,580.0 727.5,570.0 722.5,550.0" fill="url(#hR)" opacity="0.8"/>
<polygon points="722.5,550.0 725.0,527.5 730.0,520.0 865.0,445.0 880.0,440.0 882.5,460.0 738.8,537.5" fill="url(#hR)" opacity="0.7"/>
<polyline points="722.5,550.0 725.0,527.5 730.0,520.0 865.0,445.0 880.0,440.0 915.0,441.2 930.0,452.5 940.0,456.2 1070.0,560.0 1072.5,585.0 1067.5,607.5 1057.5,610.0 930.0,681.2 925.0,687.5 870.0,685.0 865.0,675.0 740.0,580.0 727.5,570.0 722.5,550.0 722.5,550.0" fill="none" stroke="#f08080" stroke-width="0.8" />
<polygon points="687.5,537.5 721.5,539.0 721.5,561.0 687.5,558.0" fill="#6797c1" />
<polygon points="687.5,558.0 721.5,561.0 738.0,566.0 738.0,573.0 687.5,566.0" fill="#456a8b" />
<polygon points="880.5,427.5 913.8,431.2 913.8,462.5 880.5,458.8" fill="#5f8fb8" />
<polygon points="1050.0,576.5 1107.6,579.4 1106.6,601.0 1055.3,598.0" fill="#6797c1" />
<polygon points="1055.3,598.0 1106.6,601.0 1105.5,611.2 1055.3,607.0" fill="#456a8b" />
<polygon points="881.0,676.0 915.0,678.0 915.0,716.0 881.0,714.0" fill="#5f8fb8" />
<polygon points="881.0,706.0 915.0,709.0 915.0,719.0 881.0,716.0" fill="#456a8b" />
<polygon points="738.5,571.0 868.5,670.0 868.5,681.0 738.5,578.0" fill="#456a8b" />
<polygon points="870.0,669.0 930.0,674.0 930.0,687.0 870.0,681.0" fill="#3d6184" />
<polygon points="927.5,674.5 1055.5,602.0 1055.5,613.0 927.5,687.5" fill="#18242f" />
<path d="M738.5 537.0 L882.5 459.5 L915.0 463.0 L1056.5 570.0 L1056.5 603.0 L929.0 675.5 L869.0 670.5 L738.5 571.5 Z M775.3 550.0 L890.0 484.0 L1022.5 575.5 L900.0 643.0 Z" fill="#6a9dd0" fill-rule="evenodd"/>
<polygon points="738.5,571.5 869.0,670.5 888.2,653.5 761.3,558.2" fill="#47719f" />
<polygon points="738.5,537.0 882.5,459.5 885.0,474.5 772.7,539.6" fill="#47719f" />
<polygon points="738.5,537.0 772.7,539.6 775.3,550.0 761.3,558.2 738.5,571.5" fill="#47719f" />
<polygon points="915.0,463.0 1056.5,570.0 1037.8,573.0 901.2,474.5" fill="#47719f" />
<polygon points="929.0,675.5 1056.5,603.0 1056.5,570.0 1037.8,573.0 1035.4,586.0 911.0,655.3" fill="#47719f" />
<polygon points="869.0,670.5 929.0,675.5 911.0,655.3 888.2,653.5" fill="#47719f" />
<polygon points="775.3,550.0 787.0,543.0 905.0,632.0 900.0,643.0" fill="#5f92c4" />
<polygon points="890.0,484.0 899.0,479.0 1030.0,571.0 1022.5,575.5" fill="#4a7399" />
<polygon points="899.0,479.0 908.0,474.0 1040.0,566.0 1030.0,571.0" fill="#5f92c4" />
<polygon points="900.0,643.0 1022.5,575.5 1030.0,580.0 906.0,650.0" fill="#5f92c4" />
<polygon points="772.7,539.6 885.0,474.5 885.0,486.0 775.3,550.0" fill="#18242f" />
<polygon points="886.2,460.0 903.0,462.5 903.0,485.0 887.5,483.0" fill="#5f8fb8" />
<polygon points="775.3,550.0 890.0,484.0 1022.5,575.5 900.0,643.0" fill="#fff" />
<polygon points="775.3,550.0 890.0,484.0 1022.5,575.5 900.0,643.0" fill="url(#hR)" opacity="0.85"/>
<polyline points="790.0,556.0 884.0,628.0 905.0,640.0 1010.0,580.0" fill="none" stroke="#f08080" stroke-width="1.2" opacity="0.8"/>
<ellipse cx="754.9" cy="536.2" rx="5.0" ry="4.1" fill="#2c4560"/>
<ellipse cx="754.1" cy="534.6" rx="4.0" ry="3.2" fill="#84b8ee"/>
<ellipse cx="767.1" cy="529.4" rx="5.0" ry="4.1" fill="#2c4560"/>
<ellipse cx="766.3" cy="527.8" rx="4.0" ry="3.2" fill="#84b8ee"/>
<ellipse cx="779.3" cy="522.6" rx="5.0" ry="4.1" fill="#2c4560"/>
<ellipse cx="778.5" cy="521.0" rx="4.0" ry="3.2" fill="#84b8ee"/>
<ellipse cx="791.4" cy="515.7" rx="5.0" ry="4.1" fill="#2c4560"/>
<ellipse cx="790.6" cy="514.1" rx="4.0" ry="3.2" fill="#84b8ee"/>
<ellipse cx="803.6" cy="508.9" rx="5.0" ry="4.1" fill="#2c4560"/>
<ellipse cx="802.8" cy="507.3" rx="4.0" ry="3.2" fill="#84b8ee"/>
<ellipse cx="815.8" cy="502.1" rx="5.0" ry="4.1" fill="#2c4560"/>
<ellipse cx="815.0" cy="500.5" rx="4.0" ry="3.2" fill="#84b8ee"/>
<ellipse cx="828.0" cy="495.3" rx="5.0" ry="4.1" fill="#2c4560"/>
<ellipse cx="827.2" cy="493.7" rx="4.0" ry="3.2" fill="#84b8ee"/>
<ellipse cx="840.2" cy="488.5" rx="5.0" ry="4.1" fill="#2c4560"/>
<ellipse cx="839.4" cy="486.9" rx="4.0" ry="3.2" fill="#84b8ee"/>
<ellipse cx="852.3" cy="481.6" rx="5.0" ry="4.1" fill="#2c4560"/>
<ellipse cx="851.5" cy="480.0" rx="4.0" ry="3.2" fill="#84b8ee"/>
<ellipse cx="864.5" cy="474.8" rx="5.0" ry="4.1" fill="#2c4560"/>
<ellipse cx="863.7" cy="473.2" rx="4.0" ry="3.2" fill="#84b8ee"/>
<ellipse cx="876.7" cy="468.0" rx="5.0" ry="4.1" fill="#2c4560"/>
<ellipse cx="875.9" cy="466.4" rx="4.0" ry="3.2" fill="#84b8ee"/>
<ellipse cx="767.0" cy="539.6" rx="4.0" ry="3.3" fill="#2c4560"/>
<ellipse cx="766.2" cy="538.0" rx="3.0" ry="2.4" fill="#84b8ee"/>
<ellipse cx="779.4" cy="532.7" rx="4.0" ry="3.3" fill="#2c4560"/>
<ellipse cx="778.6" cy="531.1" rx="3.0" ry="2.4" fill="#84b8ee"/>
<ellipse cx="791.8" cy="525.7" rx="4.0" ry="3.3" fill="#2c4560"/>
<ellipse cx="791.0" cy="524.1" rx="3.0" ry="2.4" fill="#84b8ee"/>
<ellipse cx="804.2" cy="518.8" rx="4.0" ry="3.3" fill="#2c4560"/>
<ellipse cx="803.4" cy="517.2" rx="3.0" ry="2.4" fill="#84b8ee"/>
<ellipse cx="816.6" cy="511.8" rx="4.0" ry="3.3" fill="#2c4560"/>
<ellipse cx="815.8" cy="510.2" rx="3.0" ry="2.4" fill="#84b8ee"/>
<ellipse cx="829.0" cy="504.9" rx="4.0" ry="3.3" fill="#2c4560"/>
<ellipse cx="828.2" cy="503.3" rx="3.0" ry="2.4" fill="#84b8ee"/>
<ellipse cx="841.4" cy="497.9" rx="4.0" ry="3.3" fill="#2c4560"/>
<ellipse cx="840.6" cy="496.3" rx="3.0" ry="2.4" fill="#84b8ee"/>
<ellipse cx="853.8" cy="491.0" rx="4.0" ry="3.3" fill="#2c4560"/>
<ellipse cx="853.0" cy="489.4" rx="3.0" ry="2.4" fill="#84b8ee"/>
<ellipse cx="866.2" cy="484.0" rx="4.0" ry="3.3" fill="#2c4560"/>
<ellipse cx="865.4" cy="482.4" rx="3.0" ry="2.4" fill="#84b8ee"/>
<ellipse cx="878.6" cy="477.1" rx="4.0" ry="3.3" fill="#2c4560"/>
<ellipse cx="877.8" cy="475.5" rx="3.0" ry="2.4" fill="#84b8ee"/>
<ellipse cx="758.4" cy="573.4" rx="4.8" ry="3.9" fill="#2c4560"/>
<ellipse cx="757.6" cy="571.8" rx="3.8" ry="3.0" fill="#84b8ee"/>
<ellipse cx="773.7" cy="584.9" rx="4.8" ry="3.9" fill="#2c4560"/>
<ellipse cx="772.9" cy="583.2" rx="3.8" ry="3.0" fill="#84b8ee"/>
<ellipse cx="788.9" cy="596.4" rx="4.8" ry="3.9" fill="#2c4560"/>
<ellipse cx="788.1" cy="594.8" rx="3.8" ry="3.0" fill="#84b8ee"/>
<ellipse cx="804.2" cy="607.9" rx="4.8" ry="3.9" fill="#2c4560"/>
<ellipse cx="803.4" cy="606.2" rx="3.8" ry="3.0" fill="#84b8ee"/>
<ellipse cx="819.4" cy="619.4" rx="4.8" ry="3.9" fill="#2c4560"/>
<ellipse cx="818.6" cy="617.8" rx="3.8" ry="3.0" fill="#84b8ee"/>
<ellipse cx="834.7" cy="630.9" rx="4.8" ry="3.9" fill="#2c4560"/>
<ellipse cx="833.9" cy="629.2" rx="3.8" ry="3.0" fill="#84b8ee"/>
<ellipse cx="849.9" cy="642.4" rx="4.8" ry="3.9" fill="#2c4560"/>
<ellipse cx="849.1" cy="640.8" rx="3.8" ry="3.0" fill="#84b8ee"/>
<ellipse cx="865.2" cy="653.9" rx="4.8" ry="3.9" fill="#2c4560"/>
<ellipse cx="864.4" cy="652.2" rx="3.8" ry="3.0" fill="#84b8ee"/>
<ellipse cx="774.4" cy="564.3" rx="4.8" ry="3.9" fill="#2c4560"/>
<ellipse cx="773.6" cy="562.7" rx="3.8" ry="3.0" fill="#84b8ee"/>
<ellipse cx="789.7" cy="575.7" rx="4.8" ry="3.9" fill="#2c4560"/>
<ellipse cx="788.9" cy="574.1" rx="3.8" ry="3.0" fill="#84b8ee"/>
<ellipse cx="804.9" cy="587.0" rx="4.8" ry="3.9" fill="#2c4560"/>
<ellipse cx="804.1" cy="585.4" rx="3.8" ry="3.0" fill="#84b8ee"/>
<ellipse cx="820.2" cy="598.4" rx="4.8" ry="3.9" fill="#2c4560"/>
<ellipse cx="819.4" cy="596.8" rx="3.8" ry="3.0" fill="#84b8ee"/>
<ellipse cx="835.4" cy="609.8" rx="4.8" ry="3.9" fill="#2c4560"/>
<ellipse cx="834.6" cy="608.2" rx="3.8" ry="3.0" fill="#84b8ee"/>
<ellipse cx="850.7" cy="621.2" rx="4.8" ry="3.9" fill="#2c4560"/>
<ellipse cx="849.9" cy="619.6" rx="3.8" ry="3.0" fill="#84b8ee"/>
<ellipse cx="865.9" cy="632.5" rx="4.8" ry="3.9" fill="#2c4560"/>
<ellipse cx="865.1" cy="630.9" rx="3.8" ry="3.0" fill="#84b8ee"/>
<ellipse cx="881.2" cy="643.9" rx="4.8" ry="3.9" fill="#2c4560"/>
<ellipse cx="880.4" cy="642.3" rx="3.8" ry="3.0" fill="#84b8ee"/>
<ellipse cx="924.8" cy="478.1" rx="4.6" ry="3.8" fill="#2c4560"/>
<ellipse cx="924.0" cy="476.5" rx="3.6" ry="2.9" fill="#84b8ee"/>
<ellipse cx="936.8" cy="487.2" rx="4.6" ry="3.8" fill="#2c4560"/>
<ellipse cx="936.0" cy="485.6" rx="3.6" ry="2.9" fill="#84b8ee"/>
<ellipse cx="948.8" cy="496.3" rx="4.6" ry="3.8" fill="#2c4560"/>
<ellipse cx="948.0" cy="494.7" rx="3.6" ry="2.9" fill="#84b8ee"/>
<ellipse cx="960.8" cy="505.4" rx="4.6" ry="3.8" fill="#2c4560"/>
<ellipse cx="960.0" cy="503.8" rx="3.6" ry="2.9" fill="#84b8ee"/>
<ellipse cx="972.8" cy="514.5" rx="4.6" ry="3.8" fill="#2c4560"/>
<ellipse cx="972.0" cy="512.9" rx="3.6" ry="2.9" fill="#84b8ee"/>
<ellipse cx="984.8" cy="523.6" rx="4.6" ry="3.8" fill="#2c4560"/>
<ellipse cx="984.0" cy="522.0" rx="3.6" ry="2.9" fill="#84b8ee"/>
<ellipse cx="996.8" cy="532.7" rx="4.6" ry="3.8" fill="#2c4560"/>
<ellipse cx="996.0" cy="531.1" rx="3.6" ry="2.9" fill="#84b8ee"/>
<ellipse cx="1008.8" cy="541.8" rx="4.6" ry="3.8" fill="#2c4560"/>
<ellipse cx="1008.0" cy="540.2" rx="3.6" ry="2.9" fill="#84b8ee"/>
<ellipse cx="1020.8" cy="550.9" rx="4.6" ry="3.8" fill="#2c4560"/>
<ellipse cx="1020.0" cy="549.3" rx="3.6" ry="2.9" fill="#84b8ee"/>
<ellipse cx="1032.8" cy="560.0" rx="4.6" ry="3.8" fill="#2c4560"/>
<ellipse cx="1032.0" cy="558.4" rx="3.6" ry="2.9" fill="#84b8ee"/>
<ellipse cx="1044.8" cy="569.1" rx="4.6" ry="3.8" fill="#2c4560"/>
<ellipse cx="1044.0" cy="567.5" rx="3.6" ry="2.9" fill="#84b8ee"/>
<ellipse cx="913.2" cy="486.4" rx="3.6" ry="3.0" fill="#2c4560"/>
<ellipse cx="912.4" cy="484.8" rx="2.6" ry="2.1" fill="#84b8ee"/>
<ellipse cx="926.0" cy="496.0" rx="3.6" ry="3.0" fill="#2c4560"/>
<ellipse cx="925.2" cy="494.4" rx="2.6" ry="2.1" fill="#84b8ee"/>
<ellipse cx="938.8" cy="505.6" rx="3.6" ry="3.0" fill="#2c4560"/>
<ellipse cx="938.0" cy="504.0" rx="2.6" ry="2.1" fill="#84b8ee"/>
<ellipse cx="951.6" cy="515.2" rx="3.6" ry="3.0" fill="#2c4560"/>
<ellipse cx="950.8" cy="513.6" rx="2.6" ry="2.1" fill="#84b8ee"/>
<ellipse cx="964.4" cy="524.8" rx="3.6" ry="3.0" fill="#2c4560"/>
<ellipse cx="963.6" cy="523.2" rx="2.6" ry="2.1" fill="#84b8ee"/>
<ellipse cx="977.2" cy="534.4" rx="3.6" ry="3.0" fill="#2c4560"/>
<ellipse cx="976.4" cy="532.8" rx="2.6" ry="2.1" fill="#84b8ee"/>
<ellipse cx="990.0" cy="544.0" rx="3.6" ry="3.0" fill="#2c4560"/>
<ellipse cx="989.2" cy="542.4" rx="2.6" ry="2.1" fill="#84b8ee"/>
<ellipse cx="1002.8" cy="553.6" rx="3.6" ry="3.0" fill="#2c4560"/>
<ellipse cx="1002.0" cy="552.0" rx="2.6" ry="2.1" fill="#84b8ee"/>
<ellipse cx="1015.6" cy="563.2" rx="3.6" ry="3.0" fill="#2c4560"/>
<ellipse cx="1014.8" cy="561.6" rx="2.6" ry="2.1" fill="#84b8ee"/>
<ellipse cx="1028.4" cy="572.8" rx="3.6" ry="3.0" fill="#2c4560"/>
<ellipse cx="1027.6" cy="571.2" rx="2.6" ry="2.1" fill="#84b8ee"/>
<ellipse cx="944.0" cy="660.9" rx="4.8" ry="3.9" fill="#2c4560"/>
<ellipse cx="943.2" cy="659.3" rx="3.8" ry="3.0" fill="#84b8ee"/>
<ellipse cx="960.4" cy="651.5" rx="4.8" ry="3.9" fill="#2c4560"/>
<ellipse cx="959.6" cy="649.9" rx="3.8" ry="3.0" fill="#84b8ee"/>
<ellipse cx="976.9" cy="642.0" rx="4.8" ry="3.9" fill="#2c4560"/>
<ellipse cx="976.1" cy="640.4" rx="3.8" ry="3.0" fill="#84b8ee"/>
<ellipse cx="993.3" cy="632.6" rx="4.8" ry="3.9" fill="#2c4560"/>
<ellipse cx="992.5" cy="631.0" rx="3.8" ry="3.0" fill="#84b8ee"/>
<ellipse cx="1009.7" cy="623.2" rx="4.8" ry="3.9" fill="#2c4560"/>
<ellipse cx="1008.9" cy="621.6" rx="3.8" ry="3.0" fill="#84b8ee"/>
<ellipse cx="1026.2" cy="613.7" rx="4.8" ry="3.9" fill="#2c4560"/>
<ellipse cx="1025.4" cy="612.1" rx="3.8" ry="3.0" fill="#84b8ee"/>
<ellipse cx="1042.6" cy="604.3" rx="4.8" ry="3.9" fill="#2c4560"/>
<ellipse cx="1041.8" cy="602.7" rx="3.8" ry="3.0" fill="#84b8ee"/>
<ellipse cx="930.9" cy="652.0" rx="4.4" ry="3.6" fill="#2c4560"/>
<ellipse cx="930.1" cy="650.4" rx="3.4" ry="2.7" fill="#84b8ee"/>
<ellipse cx="947.2" cy="642.7" rx="4.4" ry="3.6" fill="#2c4560"/>
<ellipse cx="946.4" cy="641.1" rx="3.4" ry="2.7" fill="#84b8ee"/>
<ellipse cx="963.5" cy="633.4" rx="4.4" ry="3.6" fill="#2c4560"/>
<ellipse cx="962.7" cy="631.8" rx="3.4" ry="2.7" fill="#84b8ee"/>
<ellipse cx="979.8" cy="624.1" rx="4.4" ry="3.6" fill="#2c4560"/>
<ellipse cx="979.0" cy="622.5" rx="3.4" ry="2.7" fill="#84b8ee"/>
<ellipse cx="996.1" cy="614.8" rx="4.4" ry="3.6" fill="#2c4560"/>
<ellipse cx="995.3" cy="613.2" rx="3.4" ry="2.7" fill="#84b8ee"/>
<ellipse cx="1012.4" cy="605.5" rx="4.4" ry="3.6" fill="#2c4560"/>
<ellipse cx="1011.6" cy="603.9" rx="3.4" ry="2.7" fill="#84b8ee"/>
<ellipse cx="1028.7" cy="596.2" rx="4.4" ry="3.6" fill="#2c4560"/>
<ellipse cx="1027.9" cy="594.6" rx="3.4" ry="2.7" fill="#84b8ee"/>
<ellipse cx="886.1" cy="663.9" rx="4.0" ry="3.3" fill="#2c4560"/>
<ellipse cx="885.3" cy="662.3" rx="3.0" ry="2.4" fill="#84b8ee"/>
<ellipse cx="900.8" cy="664.6" rx="4.0" ry="3.3" fill="#2c4560"/>
<ellipse cx="900.0" cy="663.0" rx="3.0" ry="2.4" fill="#84b8ee"/>
<ellipse cx="915.5" cy="665.3" rx="4.0" ry="3.3" fill="#2c4560"/>
<ellipse cx="914.7" cy="663.7" rx="3.0" ry="2.4" fill="#84b8ee"/>
<ellipse cx="772.9" cy="574.7" rx="4.5" ry="2.6" transform="rotate(-35 772.9 574.7)" fill="#18242f"/>
<ellipse cx="774.4" cy="575.7" rx="2" ry="1.3" transform="rotate(-35 774.4 575.7)" fill="#fff"/>
<ellipse cx="791.4" cy="588.5" rx="4.5" ry="2.6" transform="rotate(-35 791.4 588.5)" fill="#18242f"/>
<ellipse cx="792.9" cy="589.5" rx="2" ry="1.3" transform="rotate(-35 792.9 589.5)" fill="#fff"/>
<ellipse cx="809.8" cy="602.4" rx="4.5" ry="2.6" transform="rotate(-35 809.8 602.4)" fill="#18242f"/>
<ellipse cx="811.3" cy="603.4" rx="2" ry="1.3" transform="rotate(-35 811.3 603.4)" fill="#fff"/>
<ellipse cx="828.3" cy="616.2" rx="4.5" ry="2.6" transform="rotate(-35 828.3 616.2)" fill="#18242f"/>
<ellipse cx="829.8" cy="617.2" rx="2" ry="1.3" transform="rotate(-35 829.8 617.2)" fill="#fff"/>
<ellipse cx="846.8" cy="630.1" rx="4.5" ry="2.6" transform="rotate(-35 846.8 630.1)" fill="#18242f"/>
<ellipse cx="848.3" cy="631.1" rx="2" ry="1.3" transform="rotate(-35 848.3 631.1)" fill="#fff"/>
<ellipse cx="865.2" cy="643.9" rx="4.5" ry="2.6" transform="rotate(-35 865.2 643.9)" fill="#18242f"/>
<ellipse cx="866.7" cy="644.9" rx="2" ry="1.3" transform="rotate(-35 866.7 644.9)" fill="#fff"/>
<ellipse cx="960.0" cy="641.2" rx="3" ry="1.6" transform="rotate(-30 960.0 641.2)" fill="#fff"/>
<ellipse cx="985.0" cy="626.5" rx="3" ry="1.6" transform="rotate(-30 985.0 626.5)" fill="#fff"/>
<ellipse cx="1010.0" cy="611.8" rx="3" ry="1.6" transform="rotate(-30 1010.0 611.8)" fill="#fff"/>
<ellipse cx="899" cy="657" rx="3.5" ry="2.6" fill="#fff" stroke="#18242f" stroke-width="1.5"/>
<path d="M738.5 537.0 L882.5 459.5 L915.0 463.0 L1056.5 570.0 L1056.5 603.0 L929.0 675.5 L869.0 670.5 L738.5 571.5 Z M775.3 550.0 L890.0 484.0 L1022.5 575.5 L900.0 643.0 Z" fill="url(#hR2)" fill-rule="evenodd" opacity="0.7"/>
<polygon points="917.0,537.0 932.0,531.0 952.0,538.0 938.0,546.0" fill="#2e3aa8" />
<polygon points="917.0,537.0 938.0,546.0 938.0,567.0 917.0,555.0" fill="#141a70" />
<polygon points="938.0,546.0 952.0,538.0 952.0,556.0 938.0,567.0" fill="#1f2890" />
<polygon points="917.0,537.0 932.0,531.0 952.0,538.0 952.0,556.0 938.0,567.0 917.0,555.0" fill="url(#hRw)" opacity="0.8"/>
<polyline points="935.0,537.0 936.0,518.0" fill="none" stroke="#2a2a2a" stroke-width="2.2" />
<polyline points="926.0,535.0 911.0,527.0" fill="none" stroke="#555" stroke-width="1.8" />
<polyline points="947.0,537.0 962.0,531.0" fill="none" stroke="#555" stroke-width="1.8" />
<polyline points="930.0,681.2 1057.5,610.0 1067.5,607.5" fill="none" stroke="#e89ae8" stroke-width="1" />
<polyline points="722.5,550.0 727.5,570.0 740.0,580.0" fill="none" stroke="#e89ae8" stroke-width="0.8" />
<polyline points="724.8,489.4 868.0,408.8 929.0,414.8 1074.0,545.0" fill="none" stroke="#0aee0a" stroke-width="1.0" />
<polyline points="724.8,489.4 720.0,568.5" fill="none" stroke="#0aee0a" stroke-width="1.0" />
<polyline points="1074.0,545.0 1072.2,607.0" fill="none" stroke="#0aee0a" stroke-width="2" />
<polyline points="868.0,408.8 865.7,446.0" fill="none" stroke="#0aee0a" stroke-width="1.0" />
<polyline points="929.0,414.8 927.8,450.6" fill="none" stroke="#0aee0a" stroke-width="1.0" />
<polyline points="720.0,568.5 870.0,681.0 930.0,686.5 1072.2,607.0" fill="none" stroke="#0aee0a" stroke-width="1.0" />
<polyline points="870.0,681.0 871.0,645.0 931.0,647.5 930.0,686.5" fill="none" stroke="#0aee0a" stroke-width="1.0" />
<polyline points="871.0,645.0 723.0,534.0" fill="none" stroke="#0aee0a" stroke-width="1.0" />
<polyline points="931.0,647.5 1073.8,566.0" fill="none" stroke="#0aee0a" stroke-width="1.0" />
<polyline points="724.0,490.0 694.0,510.0 692.0,590.0 720.0,568.0" fill="none" stroke="#0aee0a" stroke-width="0.8" stroke-dasharray="5 4"/>
<polyline points="694.0,510.0 722.0,532.0" fill="none" stroke="#0aee0a" stroke-width="0.8" stroke-dasharray="5 4"/>
<polyline points="868.0,408.8 900.0,392.0 929.0,414.8" fill="none" stroke="#0aee0a" stroke-width="0.8" stroke-dasharray="5 4"/>
<polyline points="900.0,392.0 898.0,430.0" fill="none" stroke="#0aee0a" stroke-width="0.8" stroke-dasharray="5 4"/>
<polyline points="1074.8,566.0 1106.6,552.8 1103.5,589.7 1073.8,606.0" fill="none" stroke="#0aee0a" stroke-width="0.8" stroke-dasharray="5 4"/>
<polyline points="1103.5,589.7 1082.0,577.0" fill="none" stroke="#0aee0a" stroke-width="0.8" stroke-dasharray="5 4"/>
<polyline points="870.0,681.0 898.0,705.0 930.0,686.5" fill="none" stroke="#0aee0a" stroke-width="0.8" stroke-dasharray="5 4"/>
<polyline points="898.0,705.0 899.0,670.0" fill="none" stroke="#0aee0a" stroke-width="0.8" stroke-dasharray="5 4"/>
<polyline points="871.0,392.0 869.0,409.0" fill="none" stroke="#c8a8a8" stroke-width="1" stroke-dasharray="4 3"/>
</g>
<g id="part3">
<polygon points="1020.0,445.0 1112.5,396.2 1217.5,471.2 1213.8,475.0 1130.0,521.2 1117.5,520.0" fill="url(#hS)" />
<polygon points="950.0,377.5 975.0,370.0 995.0,372.5 1005.0,390.0 1010.0,420.0 1017.5,485.0 1002.5,492.5 982.5,480.0 977.5,410.0" fill="url(#hS)" opacity="0.9"/>
<polygon points="1030.0,377.5 1050.0,372.5 1070.0,385.0 1095.0,370.0 1110.0,370.0 1110.0,377.5 1060.0,400.0" fill="url(#hS)" opacity="0.9"/>
<polygon points="1132.5,370.0 1160.0,377.5 1180.0,400.0 1192.5,390.0 1195.0,372.5 1205.0,377.5 1227.5,400.0 1180.0,410.0" fill="url(#hS)" opacity="0.9"/>
<polygon points="1222.5,430.0 1240.0,407.5 1260.0,402.5 1280.0,410.0 1275.0,440.0 1265.0,500.0 1245.0,520.0 1227.5,520.0 1220.0,497.5 1242.5,485.0" fill="url(#hS)" opacity="0.9"/>
<polygon points="1100.0,553.0 1105.0,492.5 1120.0,482.5 1140.0,485.0 1152.5,510.0 1153.8,553.0" fill="url(#hS)" opacity="0.9"/>
<polygon points="1060.0,530.0 1065.0,510.0 1095.0,535.0 1095.0,553.0 1067.5,553.0" fill="url(#hS)" opacity="0.9"/>
<polygon points="1177.5,525.0 1197.5,510.0 1232.5,530.0 1235.0,553.0 1185.0,553.0" fill="url(#hS)" opacity="0.9"/>
<polygon points="925.0,384.0 989.0,386.0 980.0,397.0 925.0,395.0" fill="#6797c1" />
<polygon points="925.0,395.0 980.0,397.0 977.5,408.0 925.0,405.5" fill="#456a8b" />
<polygon points="977.5,408.0 990.0,387.0 998.0,445.0 992.5,468.0 986.0,458.0" fill="#4b7398" />
<polygon points="989.0,387.5 991.5,387.5 1000.0,445.0 997.0,446.0" fill="#000" />
<polygon points="1010.0,383.0 1030.0,375.0 1060.0,396.0 1035.0,410.0" fill="#5f8fb8" />
<polygon points="1010.0,383.0 1035.0,410.0 1035.0,422.0 1010.0,397.0" fill="#456a8b" />
<polygon points="1035.0,410.0 1060.0,396.0 1060.0,405.0 1035.0,422.0" fill="#18242f" />
<polygon points="1116.0,275.5 1134.5,277.0 1128.0,368.0 1110.0,372.0" fill="#5f8fb8" />
<polygon points="1132.5,277.0 1134.5,277.0 1128.0,368.0 1126.5,368.0" fill="#0c141c" />
<polygon points="1005.0,435.0 1110.0,370.0 1113.0,388.0 1020.0,446.0" fill="#5f8fb8" />
<polygon points="1020.0,446.0 1113.0,388.0 1113.0,397.0 1020.0,453.0" fill="#18242f" />
<polygon points="1112.5,380.0 1127.5,371.0 1236.0,452.0 1218.0,470.0" fill="#5f8fb8" />
<polygon points="1112.5,380.0 1122.5,375.0 1229.0,458.0 1220.0,467.5" fill="#87b7e9" />
<polygon points="1112.5,380.0 1220.0,467.5 1217.5,471.0 1112.5,396.0" fill="#4a7399" />
<polygon points="1178.0,410.0 1208.0,396.0 1232.0,410.0 1202.0,424.0" fill="#5f8fb8" />
<polygon points="1202.0,424.0 1232.0,410.0 1232.0,421.0 1203.0,434.0" fill="#18242f" />
<polygon points="1006.0,435.0 1117.5,521.0 1114.0,538.0 1095.0,538.0 992.5,452.0" fill="#5f8fb8" />
<polygon points="992.5,452.0 1095.0,538.0 1095.0,546.0 990.0,462.0" fill="#456a8b" />
<polygon points="1006.0,435.0 1008.0,434.0 1118.0,520.0 1117.5,523.0" fill="#18242f" />
<polygon points="1009.0,509.0 1033.0,498.0 1064.0,509.0 1031.0,523.0" fill="#5f8fb8" />
<polygon points="1031.0,523.0 1064.0,509.0 1064.0,515.0 1032.0,529.0" fill="#18242f" />
<polygon points="1009.0,509.0 1031.0,523.0 1032.0,529.0 1009.0,514.0" fill="#456a8b" />
<polygon points="1282.5,422.0 1320.0,422.5 1320.0,433.0 1282.0,430.0" fill="#6797c1" />
<polygon points="1282.0,430.0 1320.0,433.0 1320.0,442.0 1280.0,438.0" fill="#456a8b" />
<polygon points="1258.0,418.0 1266.0,417.0 1302.0,426.0 1284.0,438.0 1266.0,442.0 1258.0,480.0 1246.0,494.0 1243.0,478.0 1250.0,466.0" fill="#5f8fb8" />
<polygon points="1266.0,442.0 1258.0,480.0 1246.0,494.0 1252.0,470.0" fill="#456a8b" />
<polygon points="1132.0,520.0 1215.0,474.0 1240.0,466.0 1243.0,478.0 1132.0,538.0" fill="#5f8fb8" />
<polygon points="1132.0,538.0 1243.0,478.0 1243.0,494.0 1210.0,512.0 1174.0,528.0 1132.0,556.0" fill="#18242f" />
<polygon points="1176.0,522.0 1204.0,508.0 1234.0,532.0 1210.0,546.0" fill="#5f8fb8" />
<polygon points="1176.0,522.0 1210.0,546.0 1210.0,555.0 1176.0,528.0" fill="#456a8b" />
<polygon points="1210.0,546.0 1234.0,532.0 1234.0,540.0 1210.0,555.0" fill="#18242f" />
<polygon points="1095.0,525.0 1114.0,538.0 1131.0,540.0 1131.0,561.0 1113.0,559.0 1112.0,549.0 1095.0,536.0" fill="#456a8b" />
<polygon points="1116.0,497.0 1135.0,498.4 1132.0,540.0 1114.0,538.0" fill="#5f8fb8" />
<polygon points="1131.0,500.0 1135.0,498.4 1132.0,561.0 1130.0,561.0" fill="#22364a" />
<polygon points="1005.0,435.0 1110.0,370.0 1113.0,388.0 1020.0,446.0" fill="url(#hSw)" opacity="0.95"/>
<polygon points="1112.5,380.0 1127.5,371.0 1236.0,452.0 1218.0,470.0" fill="url(#hSw)" opacity="0.95"/>
<polygon points="1006.0,435.0 1117.5,521.0 1114.0,538.0 1095.0,538.0 992.5,452.0" fill="url(#hSw)" opacity="0.95"/>
<polygon points="1132.0,520.0 1215.0,474.0 1240.0,466.0 1243.0,478.0 1132.0,538.0" fill="url(#hSw)" opacity="0.95"/>
<polygon points="1116.0,275.5 1134.5,277.0 1128.0,368.0 1110.0,372.0" fill="url(#hSw)" opacity="0.95"/>
<polygon points="977.5,408.0 990.0,387.0 998.0,445.0 992.5,468.0 986.0,458.0" fill="url(#hSw)" opacity="0.95"/>
<polygon points="1258.0,418.0 1266.0,417.0 1302.0,426.0 1284.0,438.0 1266.0,442.0 1258.0,480.0 1246.0,494.0 1243.0,478.0 1250.0,466.0" fill="url(#hSw)" opacity="0.95"/>
<polygon points="1010.0,383.0 1030.0,375.0 1060.0,396.0 1035.0,410.0" fill="url(#hSw)" opacity="0.95"/>
<polygon points="1178.0,410.0 1208.0,396.0 1232.0,410.0 1202.0,424.0" fill="url(#hSw)" opacity="0.95"/>
<polygon points="1176.0,522.0 1204.0,508.0 1234.0,532.0 1210.0,546.0" fill="url(#hSw)" opacity="0.95"/>
<path d="M1117.2 485.2 Q1127.0 480.2 1136.8 485.2" fill="none" stroke="#e8928a" stroke-width="0.8" />
<path d="M1113.1 488.9 Q1127.0 483.9 1140.9 488.9" fill="none" stroke="#e8928a" stroke-width="0.8" />
<path d="M1110.0 495.0 Q1127.0 490.0 1144.0 495.0" fill="none" stroke="#e8928a" stroke-width="0.8" />
<path d="M1107.3 503.6 Q1127.0 498.6 1146.7 503.6" fill="none" stroke="#e8928a" stroke-width="0.8" />
<path d="M1105.0 514.6 Q1127.0 509.6 1149.0 514.6" fill="none" stroke="#e8928a" stroke-width="0.8" />
<path d="M1102.9 528.1 Q1127.0 523.1 1151.1 528.1" fill="none" stroke="#e8928a" stroke-width="0.8" />
<path d="M1101.0 544.0 Q1127.0 539.0 1153.0 544.0" fill="none" stroke="#e8928a" stroke-width="0.8" />
<path d="M969.2 369.3 Q981.0 366.1 992.8 372.9" fill="none" stroke="#e8928a" stroke-width="0.8" />
<path d="M964.3 371.9 Q981.0 369.4 997.7 377.0" fill="none" stroke="#e8928a" stroke-width="0.8" />
<path d="M960.5 376.9 Q981.0 375.0 1001.5 383.1" fill="none" stroke="#e8928a" stroke-width="0.8" />
<path d="M957.3 384.2 Q981.0 382.8 1004.7 391.3" fill="none" stroke="#e8928a" stroke-width="0.8" />
<path d="M954.5 393.8 Q981.0 392.8 1007.5 401.7" fill="none" stroke="#e8928a" stroke-width="0.8" />
<path d="M952.0 405.6 Q981.0 405.0 1010.0 414.4" fill="none" stroke="#e8928a" stroke-width="0.8" />
<path d="M1104.7 286.5 Q1116.0 282.6 1127.3 288.8" fill="none" stroke="#e8928a" stroke-width="0.8" />
<path d="M1100.0 290.9 Q1116.0 287.5 1132.0 294.1" fill="none" stroke="#e8928a" stroke-width="0.8" />
<path d="M1096.4 298.7 Q1116.0 295.7 1135.6 302.7" fill="none" stroke="#e8928a" stroke-width="0.8" />
<path d="M1093.3 309.9 Q1116.0 307.1 1138.7 314.4" fill="none" stroke="#e8928a" stroke-width="0.8" />
<path d="M1090.6 324.3 Q1116.0 321.8 1141.4 329.4" fill="none" stroke="#e8928a" stroke-width="0.8" />
<path d="M1088.2 342.0 Q1116.0 339.8 1143.8 347.6" fill="none" stroke="#e8928a" stroke-width="0.8" />
<path d="M1086.0 363.0 Q1116.0 361.0 1146.0 369.0" fill="none" stroke="#e8928a" stroke-width="0.8" />
<path d="M1251.4 401.2 Q1262.0 399.4 1272.6 407.6" fill="none" stroke="#e8928a" stroke-width="0.8" />
<path d="M1247.0 404.1 Q1262.0 403.6 1277.0 413.1" fill="none" stroke="#e8928a" stroke-width="0.8" />
<path d="M1243.6 410.0 Q1262.0 410.5 1280.4 421.0" fill="none" stroke="#e8928a" stroke-width="0.8" />
<path d="M1240.8 418.9 Q1262.0 420.2 1283.2 431.6" fill="none" stroke="#e8928a" stroke-width="0.8" />
<path d="M1238.3 430.6 Q1262.0 432.7 1285.7 444.8" fill="none" stroke="#e8928a" stroke-width="0.8" />
<path d="M1236.0 445.2 Q1262.0 448.0 1288.0 460.8" fill="none" stroke="#e8928a" stroke-width="0.8" />
<path d="M1099.0 548.0 C1100.0 516.0 1108.8 484.0 1127.0 484.0 C1143.2 484.0 1151.0 516.0 1152.0 548.0" fill="none" stroke="#e8928a" stroke-width="0.8" />
<path d="M1101.0 548.0 C1102.0 516.9 1110.1 485.8 1127.0 485.8 C1142.0 485.8 1149.0 516.9 1150.0 548.0" fill="none" stroke="#e8928a" stroke-width="0.8" />
<path d="M1103.0 548.0 C1104.0 517.8 1111.4 487.6 1127.0 487.6 C1140.7 487.6 1147.0 517.8 1148.0 548.0" fill="none" stroke="#e8928a" stroke-width="0.8" />
<path d="M1105.0 548.0 C1106.0 518.7 1112.7 489.4 1127.0 489.4 C1139.3 489.4 1145.0 518.7 1146.0 548.0" fill="none" stroke="#e8928a" stroke-width="0.8" />
<path d="M1107.0 548.0 C1108.0 519.6 1114.0 491.2 1127.0 491.2 C1138.0 491.2 1143.0 519.6 1144.0 548.0" fill="none" stroke="#e8928a" stroke-width="0.8" />
<path d="M1109.0 548.0 C1110.0 520.5 1115.3 493.0 1127.0 493.0 C1136.8 493.0 1141.0 520.5 1142.0 548.0" fill="none" stroke="#e8928a" stroke-width="0.8" />
<path d="M1111.0 548.0 C1112.0 521.4 1116.6 494.8 1127.0 494.8 C1135.5 494.8 1139.0 521.4 1140.0 548.0" fill="none" stroke="#e8928a" stroke-width="0.8" />
<path d="M1086.0 560.0 C1087.0 520.0 1100.3 480.0 1127.0 480.0 C1144.5 480.0 1153.0 523.0 1154.0 566.0" fill="none" stroke="#e89ae8" stroke-width="1.2" />
<path d="M950.0 400.0 C951.0 384.0 960.5 368.0 980.0 368.0 C1003.4 368.0 1015.0 429.0 1016.0 490.0" fill="none" stroke="#e8928a" stroke-width="0.8" />
<path d="M952.4 400.0 C953.4 385.1 962.1 370.2 980.0 370.2 C1001.8 370.2 1012.6 430.1 1013.6 490.0" fill="none" stroke="#e8928a" stroke-width="0.8" />
<path d="M954.8 400.0 C955.8 386.2 963.6 372.3 980.0 372.3 C1000.3 372.3 1010.2 431.2 1011.2 490.0" fill="none" stroke="#e8928a" stroke-width="0.8" />
<path d="M957.2 400.0 C958.2 387.2 965.2 374.5 980.0 374.5 C998.7 374.5 1007.8 432.2 1008.8 490.0" fill="none" stroke="#e8928a" stroke-width="0.8" />
<path d="M959.6 400.0 C960.6 388.3 966.7 376.6 980.0 376.6 C997.2 376.6 1005.4 433.3 1006.4 490.0" fill="none" stroke="#e8928a" stroke-width="0.8" />
<path d="M962.0 400.0 C963.0 389.4 968.3 378.8 980.0 378.8 C995.6 378.8 1003.0 434.4 1004.0 490.0" fill="none" stroke="#e8928a" stroke-width="0.8" />
<path d="M964.4 400.0 C965.4 390.5 969.9 381.0 980.0 381.0 C994.0 381.0 1000.6 435.5 1001.6 490.0" fill="none" stroke="#e8928a" stroke-width="0.8" />
<path d="M979.0 478.0 C980.0 425.0 985.0 372.0 996.0 372.0 C1007.7 372.0 1013.0 435.0 1014.0 498.0" fill="none" stroke="#e89ae8" stroke-width="1.0" />
<path d="M1083.0 368.0 C1084.0 326.0 1094.5 284.0 1116.0 284.0 C1137.5 284.0 1148.0 332.0 1149.0 380.0" fill="none" stroke="#e8928a" stroke-width="0.8" />
<path d="M1085.4 368.0 C1086.4 327.1 1096.1 286.2 1116.0 286.2 C1135.9 286.2 1145.6 333.1 1146.6 380.0" fill="none" stroke="#e8928a" stroke-width="0.8" />
<path d="M1087.8 368.0 C1088.8 328.2 1097.7 288.3 1116.0 288.3 C1134.3 288.3 1143.2 334.2 1144.2 380.0" fill="none" stroke="#e8928a" stroke-width="0.8" />
<path d="M1090.2 368.0 C1091.2 329.2 1099.2 290.5 1116.0 290.5 C1132.8 290.5 1140.8 335.2 1141.8 380.0" fill="none" stroke="#e8928a" stroke-width="0.8" />
<path d="M1092.6 368.0 C1093.6 330.3 1100.8 292.6 1116.0 292.6 C1131.2 292.6 1138.4 336.3 1139.4 380.0" fill="none" stroke="#e8928a" stroke-width="0.8" />
<path d="M1095.0 368.0 C1096.0 331.4 1102.3 294.8 1116.0 294.8 C1129.7 294.8 1136.0 337.4 1137.0 380.0" fill="none" stroke="#e8928a" stroke-width="0.8" />
<path d="M1097.4 368.0 C1098.4 332.5 1103.9 297.0 1116.0 297.0 C1128.1 297.0 1133.6 338.5 1134.6 380.0" fill="none" stroke="#e8928a" stroke-width="0.8" />
<polyline points="1086.0,372.0 1093.0,310.0 1106.0,284.0" fill="none" stroke="#e89ae8" stroke-width="1.2" />
<path d="M1233.0 455.0 C1234.0 428.0 1243.2 401.0 1262.0 401.0 C1280.2 401.0 1289.0 450.5 1290.0 500.0" fill="none" stroke="#e8928a" stroke-width="0.8" />
<path d="M1235.2 455.0 C1236.2 429.0 1244.6 403.0 1262.0 403.0 C1278.8 403.0 1286.8 451.5 1287.8 500.0" fill="none" stroke="#e8928a" stroke-width="0.8" />
<path d="M1237.4 455.0 C1238.4 430.0 1246.0 405.0 1262.0 405.0 C1277.3 405.0 1284.6 452.5 1285.6 500.0" fill="none" stroke="#e8928a" stroke-width="0.8" />
<path d="M1239.6 455.0 C1240.6 431.0 1247.4 406.9 1262.0 406.9 C1275.9 406.9 1282.4 453.5 1283.4 500.0" fill="none" stroke="#e8928a" stroke-width="0.8" />
<path d="M1241.8 455.0 C1242.8 432.0 1248.9 408.9 1262.0 408.9 C1274.5 408.9 1280.2 454.5 1281.2 500.0" fill="none" stroke="#e8928a" stroke-width="0.8" />
<path d="M1244.0 455.0 C1245.0 432.9 1250.3 410.9 1262.0 410.9 C1273.0 410.9 1278.0 455.4 1279.0 500.0" fill="none" stroke="#e8928a" stroke-width="0.8" />
<path d="M1246.2 455.0 C1247.2 433.9 1251.7 412.9 1262.0 412.9 C1271.6 412.9 1275.8 456.4 1276.8 500.0" fill="none" stroke="#e8928a" stroke-width="0.8" />
<polyline points="1228.0,470.0 1238.0,425.0 1254.0,404.0" fill="none" stroke="#e89ae8" stroke-width="1.4" />
<polyline points="1266.0,520.0 1274.0,452.0 1284.0,440.0" fill="none" stroke="#e89ae8" stroke-width="1" />
<polyline points="1150.0,600.0 1154.0,560.0 1200.0,540.0 1206.0,520.0" fill="none" stroke="#e89ae8" stroke-width="0.8" />
<polyline points="946.0,382.5 1120.0,284.0 1301.0,422.5 1127.5,522.5 946.0,382.5" fill="none" stroke="#12a012" stroke-width="0.9" />
<polyline points="941.0,457.5 1123.0,597.0 1296.0,500.0" fill="none" stroke="#12a012" stroke-width="0.9" />
<polyline points="946.0,382.5 941.0,457.5" fill="none" stroke="#12a012" stroke-width="0.9" />
<polyline points="1301.0,422.5 1296.0,500.0" fill="none" stroke="#12a012" stroke-width="0.9" />
<polyline points="1127.5,522.5 1123.0,597.0" fill="none" stroke="#12a012" stroke-width="0.9" />
<polyline points="941.0,457.5 1030.0,389.0" fill="none" stroke="#12a012" stroke-width="0.9" />
<polyline points="1296.0,500.0 1215.0,472.5" fill="none" stroke="#12a012" stroke-width="0.9" />
<polyline points="1032.5,332.5 1028.8,388.8" fill="none" stroke="#12a012" stroke-width="0.9" />
<polyline points="1215.0,472.5 1210.0,528.8" fill="none" stroke="#12a012" stroke-width="0.9" />
<polyline points="1056.0,391.0 1108.0,363.0" fill="none" stroke="#12a012" stroke-width="0.9" />
<polyline points="1122.0,266.0 1121.0,284.0" fill="none" stroke="#d0b8b8" stroke-width="1" stroke-dasharray="4 3"/>
</g>
<g id="part4">
<polygon points="1186.0,318.0 1215.0,292.0 1240.0,290.0 1262.0,300.0 1300.0,330.0 1345.0,362.0 1352.0,384.0 1330.0,396.0 1300.0,408.0 1262.0,392.0 1230.0,362.0 1200.0,340.0" fill="url(#hS)" />
<polygon points="1280.0,338.0 1316.0,316.0 1333.0,327.0 1297.0,350.0" fill="#5f8fb8" />
<polygon points="1297.0,350.0 1333.0,327.0 1333.0,336.0 1300.0,357.0" fill="#18242f" />
<polygon points="1176.3,291.0 1195.0,282.9 1232.6,308.2 1212.0,317.6" fill="#5f8fb8" />
<polygon points="1176.3,291.0 1212.0,317.6 1212.0,327.0 1176.3,300.7" fill="#456a8b" />
<polygon points="1206.3,325.1 1238.2,306.4 1333.0,379.6 1302.0,400.2" fill="#5f8fb8" />
<polygon points="1206.3,325.1 1302.0,400.2 1302.0,409.6 1206.3,337.3" fill="#456a8b" />
<polygon points="1302.0,400.2 1333.0,379.6 1333.0,388.0 1302.0,409.6" fill="#18242f" />
<polygon points="1207.3,379.6 1243.9,357.0 1260.8,368.3 1222.3,389.9" fill="#5f8fb8" />
<polygon points="1222.3,389.9 1260.8,368.3 1260.8,375.8 1222.3,398.3" fill="#18242f" />
<polygon points="1207.3,379.6 1222.3,389.9 1222.3,398.3 1207.3,388.0" fill="#456a8b" />
<polygon points="1309.2,394.3 1328.7,386.1 1363.7,412.2 1346.0,422.5" fill="#5f8fb8" />
<polygon points="1309.2,394.3 1346.0,422.5 1345.5,432.7 1309.5,402.0" fill="#456a8b" />
<polygon points="1346.0,422.5 1363.7,412.2 1363.0,422.5 1345.8,432.7" fill="#18242f" />
<ellipse cx="1244.4" cy="329.0" rx="6" ry="4" fill="#2a4058"/>
<ellipse cx="1243.4" cy="326.0" rx="5.4" ry="3.4" fill="#86b8ea"/>
<ellipse cx="1235.4" cy="332.0" rx="3.5" ry="1.8" fill="#16222e"/>
<ellipse cx="1259.2" cy="341.0" rx="6" ry="4" fill="#2a4058"/>
<ellipse cx="1258.2" cy="338.0" rx="5.4" ry="3.4" fill="#86b8ea"/>
<ellipse cx="1250.2" cy="344.0" rx="3.5" ry="1.8" fill="#16222e"/>
<ellipse cx="1274.0" cy="353.0" rx="6" ry="4" fill="#2a4058"/>
<ellipse cx="1273.0" cy="350.0" rx="5.4" ry="3.4" fill="#86b8ea"/>
<ellipse cx="1265.0" cy="356.0" rx="3.5" ry="1.8" fill="#16222e"/>
<ellipse cx="1288.8" cy="365.0" rx="6" ry="4" fill="#2a4058"/>
<ellipse cx="1287.8" cy="362.0" rx="5.4" ry="3.4" fill="#86b8ea"/>
<ellipse cx="1279.8" cy="368.0" rx="3.5" ry="1.8" fill="#16222e"/>
<ellipse cx="1303.6" cy="377.0" rx="6" ry="4" fill="#2a4058"/>
<ellipse cx="1302.6" cy="374.0" rx="5.4" ry="3.4" fill="#86b8ea"/>
<ellipse cx="1294.6" cy="380.0" rx="3.5" ry="1.8" fill="#16222e"/>
<polygon points="1206.3,325.1 1238.2,306.4 1333.0,379.6 1302.0,400.2" fill="url(#hS)" opacity="0.9"/>
<polygon points="1206.3,325.1 1302.0,400.2 1302.0,409.6 1206.3,337.3" fill="url(#hSv)" opacity="0.9"/>
<polygon points="1176.3,291.0 1195.0,282.9 1232.6,308.2 1212.0,317.6" fill="url(#hS)" opacity="0.7"/>
<polyline points="1186.0,318.0 1200.0,340.0 1230.0,362.0" fill="none" stroke="#e89ae8" stroke-width="0.9" />
<polyline points="1300.0,408.0 1330.0,396.0 1352.0,384.0 1356.0,350.0" fill="none" stroke="#e89ae8" stroke-width="1" />
<polyline points="1185.7,288.5 1240.7,258.5 1358.4,349.5 1303.0,379.6 1185.7,288.5" fill="none" stroke="#12a012" stroke-width="0.9" />
<polyline points="1183.4,326.6 1238.2,295.0 1356.5,387.0 1301.7,418.0 1183.4,326.6" fill="none" stroke="#12a012" stroke-width="0.9" />
<polyline points="1185.7,288.5 1183.4,326.6" fill="none" stroke="#12a012" stroke-width="0.9" />
<polyline points="1358.4,349.5 1356.5,387.0" fill="none" stroke="#12a012" stroke-width="0.9" />
<polyline points="1303.0,379.6 1301.7,418.0" fill="none" stroke="#12a012" stroke-width="1.4" />
<polyline points="1240.7,258.5 1238.2,295.0" fill="none" stroke="#12a012" stroke-width="0.9" />
<polyline points="1242.0,240.0 1241.0,258.0" fill="none" stroke="#d0c0c0" stroke-width="1" stroke-dasharray="4 3"/>
<polyline points="1357.8,324.0 1358.0,349.0" fill="none" stroke="#d0c0c0" stroke-width="1" stroke-dasharray="4 3"/>
</g>
<path d="M631.0 515.0 l5.5 6.5 l-1.5 3 h-8 l-1.5 -3 Z" fill="#e86060"/>
<path d="M631.5 515.0 l5.5 6.5 l-1.5 3 h-3.5 Z" fill="#c84848"/>
<path d="M835.0 665.0 l5.5 6.5 l-1.5 3 h-8 l-1.5 -3 Z" fill="#e04848"/>
<path d="M835.5 665.0 l5.5 6.5 l-1.5 3 h-3.5 Z" fill="#c03838"/>
<path d="M871.0 379.0 l5.5 6.5 l-1.5 3 h-8 l-1.5 -3 Z" fill="#e86868"/>
<path d="M871.5 379.0 l5.5 6.5 l-1.5 3 h-3.5 Z" fill="#c85050"/>
<path d="M1075.0 530.0 l5.5 6.5 l-1.5 3 h-8 l-1.5 -3 Z" fill="#e05050"/>
<path d="M1075.5 530.0 l5.5 6.5 l-1.5 3 h-3.5 Z" fill="#c04040"/>
<path d="M1122.0 253.0 l5.5 6.5 l-1.5 3 h-8 l-1.5 -3 Z" fill="#dc8a8a"/>
<path d="M1122.5 253.0 l5.5 6.5 l-1.5 3 h-3.5 Z" fill="#c07070"/>
<path d="M1301.5 385.0 l5.5 6.5 l-1.5 3 h-8 l-1.5 -3 Z" fill="#d88080"/>
<path d="M1302.0 385.0 l5.5 6.5 l-1.5 3 h-3.5 Z" fill="#b86868"/>
<path d="M1242.0 227.0 l5.5 6.5 l-1.5 3 h-8 l-1.5 -3 Z" fill="#dc9090"/>
<path d="M1242.5 227.0 l5.5 6.5 l-1.5 3 h-3.5 Z" fill="#c07878"/>
<path d="M1357.8 311.0 l5.5 6.5 l-1.5 3 h-8 l-1.5 -3 Z" fill="#d88888"/>
<path d="M1358.3 311.0 l5.5 6.5 l-1.5 3 h-3.5 Z" fill="#b87070"/>
</svg>
</div>
<svg width="1600" height="1172" viewBox="0 0 1600 1172">
<defs>
<linearGradient id="wy" x1="0" x2="1" y1="0" y2="0"><stop offset="0" stop-color="#3a3a00"/><stop offset="0.25" stop-color="#f0f000"/><stop offset="0.6" stop-color="#ffff30"/><stop offset="1" stop-color="#606000"/></linearGradient>
<linearGradient id="wr" x1="0" x2="1" y1="0" y2="0"><stop offset="0" stop-color="#400000"/><stop offset="0.25" stop-color="#f01818"/><stop offset="0.6" stop-color="#ff3030"/><stop offset="1" stop-color="#700000"/></linearGradient>
<linearGradient id="hy" x1="0" x2="0" y1="0" y2="1"><stop offset="0" stop-color="#3a3a00"/><stop offset="0.3" stop-color="#f0f000"/><stop offset="0.6" stop-color="#ffff30"/><stop offset="1" stop-color="#606000"/></linearGradient>
<linearGradient id="hr" x1="0" x2="0" y1="0" y2="1"><stop offset="0" stop-color="#400000"/><stop offset="0.3" stop-color="#f01818"/><stop offset="0.6" stop-color="#ff3030"/><stop offset="1" stop-color="#700000"/></linearGradient>
<linearGradient id="hb" x1="0" x2="0" y1="0" y2="1"><stop offset="0" stop-color="#000040"/><stop offset="0.3" stop-color="#1818f0"/><stop offset="0.6" stop-color="#3030ff"/><stop offset="1" stop-color="#000070"/></linearGradient>
<linearGradient id="fadeV" x1="0" x2="0" y1="0" y2="1"><stop offset="0" stop-color="#000" stop-opacity="0.75"/><stop offset="0.22" stop-color="#000" stop-opacity="0"/><stop offset="0.78" stop-color="#000" stop-opacity="0"/><stop offset="1" stop-color="#000" stop-opacity="0.75"/></linearGradient>
<linearGradient id="fadeH" x1="0" x2="1" y1="0" y2="0"><stop offset="0" stop-color="#000" stop-opacity="0.75"/><stop offset="0.22" stop-color="#000" stop-opacity="0"/><stop offset="0.78" stop-color="#000" stop-opacity="0"/><stop offset="1" stop-color="#000" stop-opacity="0.75"/></linearGradient>
</defs>
<rect x="327" y="966" width="16" height="50" fill="#fff"/><rect x="327" y="966" width="14.5" height="48.5" fill="#000"/><rect x="328.5" y="968.5" width="11.5" height="43.5" rx="3.5" fill="url(#wy)"/><path d="M329 971.0 h10.5" stroke="#000" stroke-opacity="0.35" stroke-width="0.8"/><path d="M329 974.0 h10.5" stroke="#000" stroke-opacity="0.35" stroke-width="0.8"/><path d="M329 976.9 h10.5" stroke="#000" stroke-opacity="0.35" stroke-width="0.8"/><path d="M329 979.9 h10.5" stroke="#000" stroke-opacity="0.35" stroke-width="0.8"/><path d="M329 982.8 h10.5" stroke="#000" stroke-opacity="0.35" stroke-width="0.8"/><path d="M329 985.8 h10.5" stroke="#000" stroke-opacity="0.35" stroke-width="0.8"/><path d="M329 988.8 h10.5" stroke="#000" stroke-opacity="0.35" stroke-width="0.8"/><path d="M329 991.7 h10.5" stroke="#000" stroke-opacity="0.35" stroke-width="0.8"/><path d="M329 994.7 h10.5" stroke="#000" stroke-opacity="0.35" stroke-width="0.8"/><path d="M329 997.7 h10.5" stroke="#000" stroke-opacity="0.35" stroke-width="0.8"/><path d="M329 1000.6 h10.5" stroke="#000" stroke-opacity="0.35" stroke-width="0.8"/><path d="M329 1003.6 h10.5" stroke="#000" stroke-opacity="0.35" stroke-width="0.8"/><path d="M329 1006.5 h10.5" stroke="#000" stroke-opacity="0.35" stroke-width="0.8"/><path d="M329 1009.5 h10.5" stroke="#000" stroke-opacity="0.35" stroke-width="0.8"/><rect x="328.5" y="968.5" width="11.5" height="43.5" rx="3.5" fill="url(#fadeV)"/>
<rect x="327" y="1036" width="16" height="50" fill="#fff"/><rect x="327" y="1036" width="14.5" height="48.5" fill="#000"/><rect x="328.5" y="1038.5" width="11.5" height="43.5" rx="3.5" fill="url(#wr)"/><path d="M329 1041.0 h10.5" stroke="#000" stroke-opacity="0.35" stroke-width="0.8"/><path d="M329 1044.0 h10.5" stroke="#000" stroke-opacity="0.35" stroke-width="0.8"/><path d="M329 1046.9 h10.5" stroke="#000" stroke-opacity="0.35" stroke-width="0.8"/><path d="M329 1049.9 h10.5" stroke="#000" stroke-opacity="0.35" stroke-width="0.8"/><path d="M329 1052.8 h10.5" stroke="#000" stroke-opacity="0.35" stroke-width="0.8"/><path d="M329 1055.8 h10.5" stroke="#000" stroke-opacity="0.35" stroke-width="0.8"/><path d="M329 1058.8 h10.5" stroke="#000" stroke-opacity="0.35" stroke-width="0.8"/><path d="M329 1061.7 h10.5" stroke="#000" stroke-opacity="0.35" stroke-width="0.8"/><path d="M329 1064.7 h10.5" stroke="#000" stroke-opacity="0.35" stroke-width="0.8"/><path d="M329 1067.7 h10.5" stroke="#000" stroke-opacity="0.35" stroke-width="0.8"/><path d="M329 1070.6 h10.5" stroke="#000" stroke-opacity="0.35" stroke-width="0.8"/><path d="M329 1073.6 h10.5" stroke="#000" stroke-opacity="0.35" stroke-width="0.8"/><path d="M329 1076.5 h10.5" stroke="#000" stroke-opacity="0.35" stroke-width="0.8"/><path d="M329 1079.5 h10.5" stroke="#000" stroke-opacity="0.35" stroke-width="0.8"/><rect x="328.5" y="1038.5" width="11.5" height="43.5" rx="3.5" fill="url(#fadeV)"/>
<rect x="385.5" y="1128.5" width="49.5" height="15.5" fill="#fff"/><rect x="385.5" y="1128.5" width="48" height="14" fill="#000"/><rect x="388" y="1130" width="43" height="11" rx="3.5" fill="url(#hr)"/><path d="M391.5 1130.5 v10" stroke="#fff" stroke-opacity="0.45" stroke-width="0.9"/><path d="M394.3 1130.5 v10" stroke="#fff" stroke-opacity="0.45" stroke-width="0.9"/><path d="M397.0 1130.5 v10" stroke="#fff" stroke-opacity="0.45" stroke-width="0.9"/><path d="M399.8 1130.5 v10" stroke="#fff" stroke-opacity="0.45" stroke-width="0.9"/><path d="M402.6 1130.5 v10" stroke="#fff" stroke-opacity="0.45" stroke-width="0.9"/><path d="M405.3 1130.5 v10" stroke="#fff" stroke-opacity="0.45" stroke-width="0.9"/><path d="M408.1 1130.5 v10" stroke="#fff" stroke-opacity="0.45" stroke-width="0.9"/><path d="M410.9 1130.5 v10" stroke="#fff" stroke-opacity="0.45" stroke-width="0.9"/><path d="M413.7 1130.5 v10" stroke="#fff" stroke-opacity="0.45" stroke-width="0.9"/><path d="M416.4 1130.5 v10" stroke="#fff" stroke-opacity="0.45" stroke-width="0.9"/><path d="M419.2 1130.5 v10" stroke="#fff" stroke-opacity="0.45" stroke-width="0.9"/><path d="M422.0 1130.5 v10" stroke="#fff" stroke-opacity="0.45" stroke-width="0.9"/><path d="M424.7 1130.5 v10" stroke="#fff" stroke-opacity="0.45" stroke-width="0.9"/><path d="M427.5 1130.5 v10" stroke="#fff" stroke-opacity="0.45" stroke-width="0.9"/><rect x="388" y="1130" width="43" height="11" rx="3.5" fill="url(#fadeH)"/>
<rect x="455.5" y="1128.5" width="49.5" height="15.5" fill="#fff"/><rect x="455.5" y="1128.5" width="48" height="14" fill="#000"/><rect x="458" y="1130" width="43" height="11" rx="3.5" fill="url(#hy)"/><path d="M461.5 1130.5 v10" stroke="#000" stroke-opacity="0.45" stroke-width="0.9"/><path d="M464.3 1130.5 v10" stroke="#000" stroke-opacity="0.45" stroke-width="0.9"/><path d="M467.0 1130.5 v10" stroke="#000" stroke-opacity="0.45" stroke-width="0.9"/><path d="M469.8 1130.5 v10" stroke="#000" stroke-opacity="0.45" stroke-width="0.9"/><path d="M472.6 1130.5 v10" stroke="#000" stroke-opacity="0.45" stroke-width="0.9"/><path d="M475.3 1130.5 v10" stroke="#000" stroke-opacity="0.45" stroke-width="0.9"/><path d="M478.1 1130.5 v10" stroke="#000" stroke-opacity="0.45" stroke-width="0.9"/><path d="M480.9 1130.5 v10" stroke="#000" stroke-opacity="0.45" stroke-width="0.9"/><path d="M483.7 1130.5 v10" stroke="#000" stroke-opacity="0.45" stroke-width="0.9"/><path d="M486.4 1130.5 v10" stroke="#000" stroke-opacity="0.45" stroke-width="0.9"/><path d="M489.2 1130.5 v10" stroke="#000" stroke-opacity="0.45" stroke-width="0.9"/><path d="M492.0 1130.5 v10" stroke="#000" stroke-opacity="0.45" stroke-width="0.9"/><path d="M494.7 1130.5 v10" stroke="#000" stroke-opacity="0.45" stroke-width="0.9"/><path d="M497.5 1130.5 v10" stroke="#000" stroke-opacity="0.45" stroke-width="0.9"/><rect x="458" y="1130" width="43" height="11" rx="3.5" fill="url(#fadeH)"/>
<rect x="525.5" y="1128.5" width="49.5" height="15.5" fill="#fff"/><rect x="525.5" y="1128.5" width="48" height="14" fill="#000"/><rect x="528" y="1130" width="43" height="11" rx="3.5" fill="url(#hb)"/><path d="M531.5 1130.5 v10" stroke="#fff" stroke-opacity="0.45" stroke-width="0.9"/><path d="M534.3 1130.5 v10" stroke="#fff" stroke-opacity="0.45" stroke-width="0.9"/><path d="M537.0 1130.5 v10" stroke="#fff" stroke-opacity="0.45" stroke-width="0.9"/><path d="M539.8 1130.5 v10" stroke="#fff" stroke-opacity="0.45" stroke-width="0.9"/><path d="M542.6 1130.5 v10" stroke="#fff" stroke-opacity="0.45" stroke-width="0.9"/><path d="M545.3 1130.5 v10" stroke="#fff" stroke-opacity="0.45" stroke-width="0.9"/><path d="M548.1 1130.5 v10" stroke="#fff" stroke-opacity="0.45" stroke-width="0.9"/><path d="M550.9 1130.5 v10" stroke="#fff" stroke-opacity="0.45" stroke-width="0.9"/><path d="M553.7 1130.5 v10" stroke="#fff" stroke-opacity="0.45" stroke-width="0.9"/><path d="M556.4 1130.5 v10" stroke="#fff" stroke-opacity="0.45" stroke-width="0.9"/><path d="M559.2 1130.5 v10" stroke="#fff" stroke-opacity="0.45" stroke-width="0.9"/><path d="M562.0 1130.5 v10" stroke="#fff" stroke-opacity="0.45" stroke-width="0.9"/><path d="M564.7 1130.5 v10" stroke="#fff" stroke-opacity="0.45" stroke-width="0.9"/><path d="M567.5 1130.5 v10" stroke="#fff" stroke-opacity="0.45" stroke-width="0.9"/><rect x="528" y="1130" width="43" height="11" rx="3.5" fill="url(#fadeH)"/>
<text x="407.5" y="1151" text-anchor="middle" font-family="Liberation Sans,sans-serif" font-size="6.6" fill="#000" stroke="#000" stroke-width="0.15">ROTATE</text>
<text x="479.5" y="1151" text-anchor="middle" font-family="Liberation Sans,sans-serif" font-size="6.6" fill="#000" stroke="#000" stroke-width="0.15">PAN</text>
<text x="549.5" y="1151" text-anchor="middle" font-family="Liberation Sans,sans-serif" font-size="6.6" fill="#000" stroke="#000" stroke-width="0.15">ZOOM</text>
<path d="M344.50 1125.50 L373.82 1125.50 A25.5 25.5 0 1 1 344.50 1097.32 Z" fill="#fff" transform="translate(1.4,1.4)"/>
<path d="M344.50 1125.50 L373.82 1125.50 A25.5 25.5 0 1 1 344.50 1097.32 Z" fill="#ff0808" stroke="#000" stroke-width="1.6"/>
<path d="M345.7 1114.5 L345.5 1101.1" stroke="#ffd0d0" stroke-opacity="0.85" stroke-width="0.7"/>
<path d="M344.2 1114.8 L341.8 1101.7" stroke="#ffd0d0" stroke-opacity="0.85" stroke-width="0.7"/>
<path d="M342.8 1115.3 L338.3 1103.0" stroke="#ffd0d0" stroke-opacity="0.85" stroke-width="0.7"/>
<path d="M341.5 1116.0 L335.0 1104.8" stroke="#ffd0d0" stroke-opacity="0.85" stroke-width="0.7"/>
<path d="M340.3 1117.0 L332.0 1107.2" stroke="#ffd0d0" stroke-opacity="0.85" stroke-width="0.7"/>
<path d="M339.3 1118.1 L329.5 1110.0" stroke="#ffd0d0" stroke-opacity="0.85" stroke-width="0.7"/>
<path d="M338.5 1119.4 L327.5 1113.1" stroke="#ffd0d0" stroke-opacity="0.85" stroke-width="0.7"/>
<path d="M337.9 1120.7 L326.1 1116.6" stroke="#ffd0d0" stroke-opacity="0.85" stroke-width="0.7"/>
<path d="M337.6 1122.2 L325.2 1120.3" stroke="#ffd0d0" stroke-opacity="0.85" stroke-width="0.7"/>
<path d="M337.5 1123.7 L325.0 1124.0" stroke="#ffd0d0" stroke-opacity="0.85" stroke-width="0.7"/>
<path d="M337.7 1125.2 L325.4 1127.8" stroke="#ffd0d0" stroke-opacity="0.85" stroke-width="0.7"/>
<path d="M338.1 1126.7 L326.4 1131.4" stroke="#ffd0d0" stroke-opacity="0.85" stroke-width="0.7"/>
<path d="M338.7 1128.0 L328.1 1134.8" stroke="#ffd0d0" stroke-opacity="0.85" stroke-width="0.7"/>
<path d="M339.6 1129.3 L330.2 1137.9" stroke="#ffd0d0" stroke-opacity="0.85" stroke-width="0.7"/>
<path d="M340.6 1130.3 L332.9 1140.6" stroke="#ffd0d0" stroke-opacity="0.85" stroke-width="0.7"/>
<path d="M341.9 1131.2 L335.9 1142.8" stroke="#ffd0d0" stroke-opacity="0.85" stroke-width="0.7"/>
<path d="M343.2 1131.9 L339.3 1144.4" stroke="#ffd0d0" stroke-opacity="0.85" stroke-width="0.7"/>
<path d="M344.7 1132.3 L342.9 1145.5" stroke="#ffd0d0" stroke-opacity="0.85" stroke-width="0.7"/>
<path d="M346.2 1132.5 L346.6 1146.0" stroke="#ffd0d0" stroke-opacity="0.85" stroke-width="0.7"/>
<path d="M347.7 1132.4 L350.4 1145.8" stroke="#ffd0d0" stroke-opacity="0.85" stroke-width="0.7"/>
<path d="M349.1 1132.1 L354.1 1145.0" stroke="#ffd0d0" stroke-opacity="0.85" stroke-width="0.7"/>
<path d="M350.5 1131.5 L357.6 1143.6" stroke="#ffd0d0" stroke-opacity="0.85" stroke-width="0.7"/>
<path d="M351.8 1130.8 L360.8 1141.7" stroke="#ffd0d0" stroke-opacity="0.85" stroke-width="0.7"/>
<path d="M353.0 1129.8 L363.6 1139.2" stroke="#ffd0d0" stroke-opacity="0.85" stroke-width="0.7"/>
<path d="M353.9 1128.6 L366.0 1136.3" stroke="#ffd0d0" stroke-opacity="0.85" stroke-width="0.7"/>
<path d="M354.7 1127.3 L367.9 1133.0" stroke="#ffd0d0" stroke-opacity="0.85" stroke-width="0.7"/>
<path d="M355.2 1125.9 L369.2 1129.5" stroke="#ffd0d0" stroke-opacity="0.85" stroke-width="0.7"/>
<path d="M355.5 1124.4 L369.9 1125.8" stroke="#ffd0d0" stroke-opacity="0.85" stroke-width="0.7"/>
<clipPath id="cpDial"><path d="M344.50 1125.50 L373.82 1125.50 A25.5 25.5 0 1 1 344.50 1097.32 Z"/></clipPath>
<circle cx="345.5" cy="1124.5" r="8" fill="#e00000" opacity="0.8" clip-path="url(#cpDial)"/>
<polygon points="380,1072 392.5,1067 404,1073 392,1080" fill="#3cb84c"/><polygon points="380,1072 392,1080 392,1092 381,1085" fill="#1e8a2e"/><polygon points="392,1080 404,1073 403,1085 392,1092" fill="#2a9c3a"/>
<path d="M392.5 1074 V1061" stroke="#333" stroke-width="2"/><path d="M386 1072.5 L376.5 1066" stroke="#555" stroke-width="2"/><path d="M400 1072.5 L409 1068.5" stroke="#555" stroke-width="2"/>
<text x="373.5" y="1062" text-anchor="middle" font-family="Liberation Sans,sans-serif" font-size="9.5" fill="#000">Y</text>
<text x="397.5" y="1055" text-anchor="middle" font-family="Liberation Sans,sans-serif" font-size="9.5" fill="#000">Z</text>
<text x="419" y="1065" text-anchor="middle" font-family="Liberation Sans,sans-serif" font-size="9.5" fill="#000">X</text>
</svg>

<!-- ===== status bar ===== -->
<div class="abs" style="left:0;top:1152px;width:1600px;height:20px;background:linear-gradient(to bottom,#ffffff 0,#ffffff 1px,#a9a9b0 1px,#c4c4cb 3px,#dddde4 6px,#dedee5 11px,#c9c9d2 15px,#b4b4c2 17px,#8d8dad 18px,#f4f4fa 19px,#f4f4fa 20px)"></div>
<div class="abs" style="left:1535px;top:1156px;width:1px;height:12px;background:#f6f0dc"></div>
<div class="abs" style="left:0;top:1170px;width:92px;height:2px;background:#3aa83a"></div>
<div class="abs" style="left:92px;top:1170px;width:1362px;height:2px;background:#c9c9e2;border-top:1px solid #9a9abc"></div>
<div class="abs" style="left:1453px;top:1170px;width:1px;height:2px;background:#55557a"></div>
<div class="abs" style="left:813px;top:1154px;line-height:15px;white-space:nowrap">Geometry: D:\3D_Models\Зубков Кирилл\JS0010P\1.stl</div>
</body>
</html>
